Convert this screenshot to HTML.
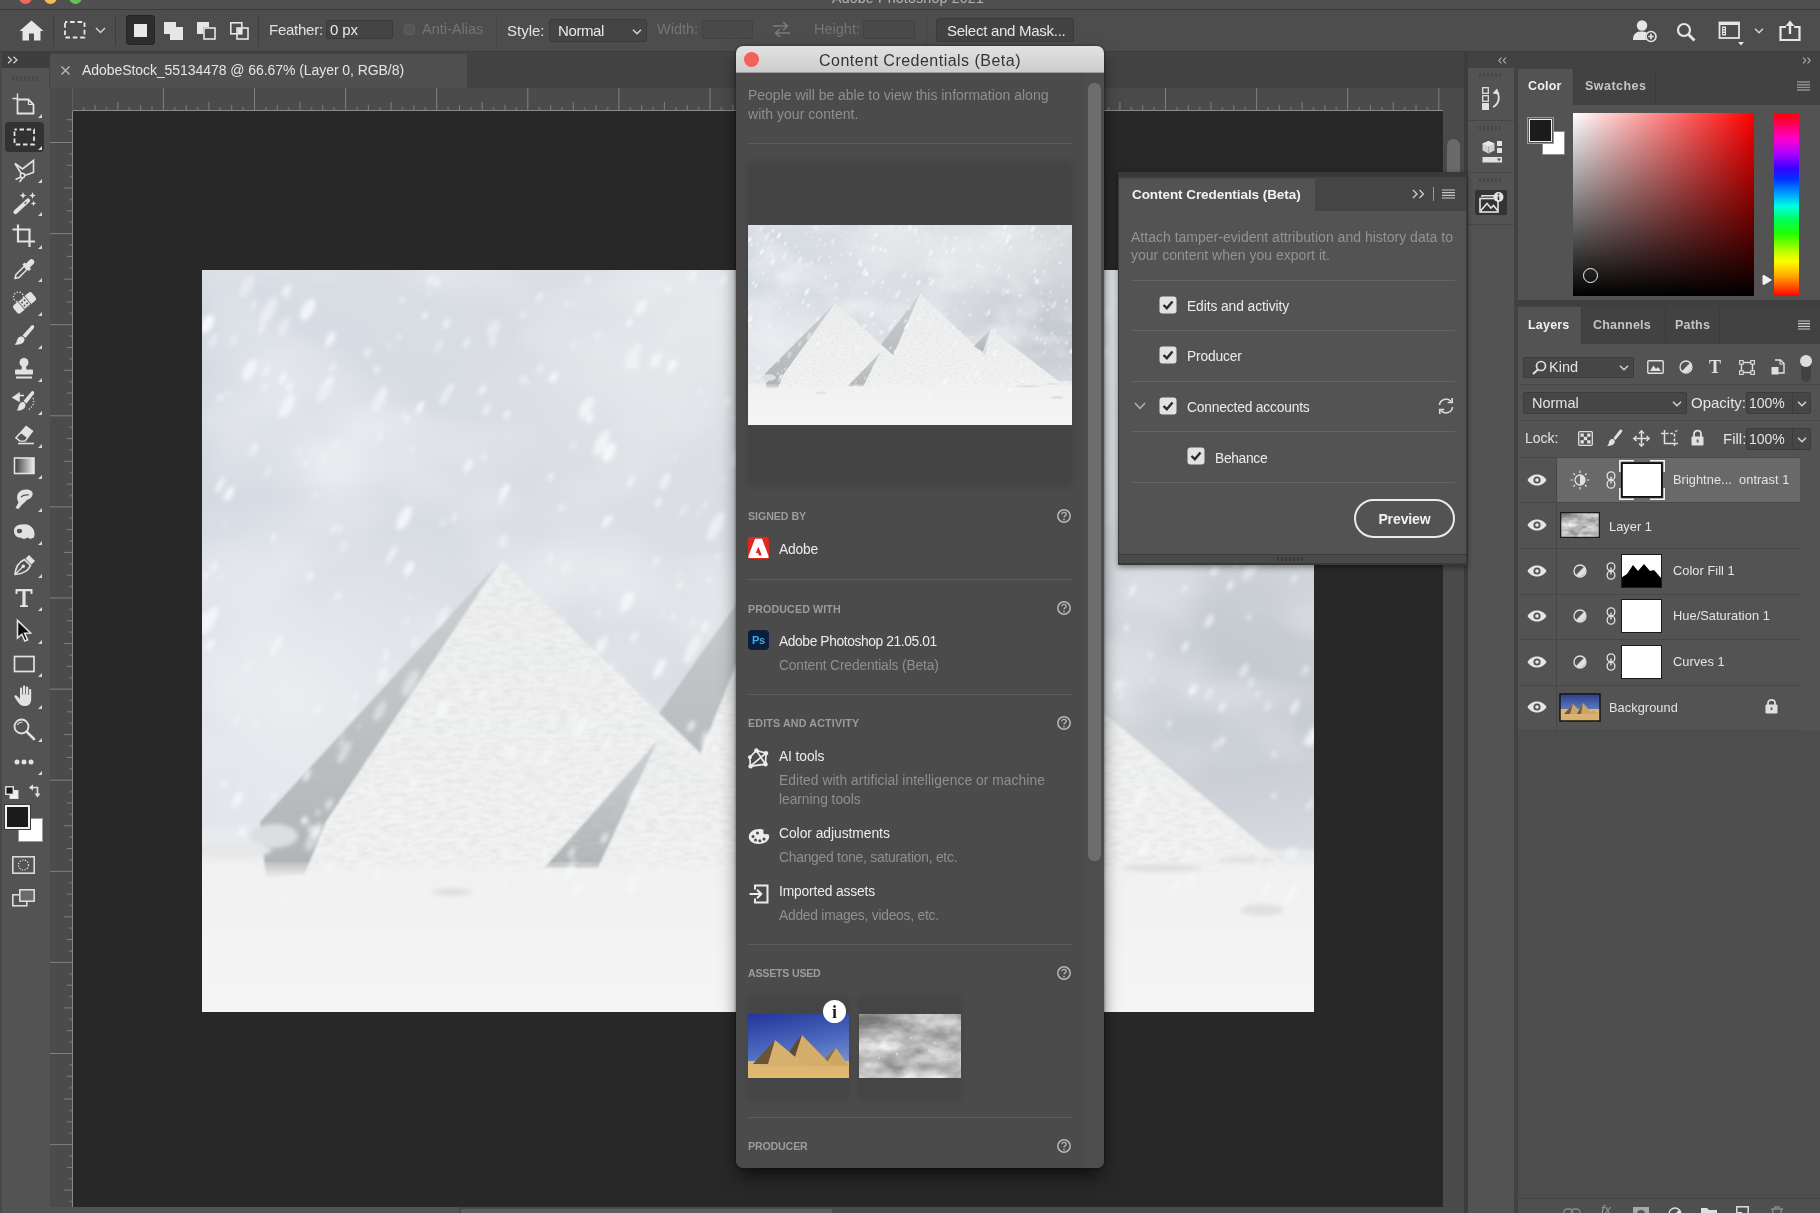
<!DOCTYPE html>
<html lang="en"><head><meta charset="utf-8"><title>Adobe Photoshop 2021</title>
<style>
*{box-sizing:border-box;margin:0;padding:0}
html,body{width:1820px;height:1213px;overflow:hidden;background:#535353;font-family:"Liberation Sans",sans-serif;color:#dcdcdc;font-size:14px}
.a{position:absolute}
#app{left:0;top:0;width:1820px;height:1213px;overflow:hidden;background:#535353}
svg{display:block;overflow:visible}
.t{position:absolute;white-space:nowrap;line-height:1;will-change:transform}
/* ---------- top bars ---------- */
#titlebar{left:0;top:0;width:1820px;height:10px;background:#505050;border-bottom:1px solid #3a3a3a}
#optbar{left:0;top:10px;width:1820px;height:42px;background:#4d4d4d;border-bottom:1px solid #3d3d3d}
#tabbar{left:49px;top:52px;width:1416px;height:36px;background:#434343}
#tab{left:1px;top:2px;width:417px;height:34px;background:#505050}
/* ---------- left toolbar ---------- */
#tools{left:0;top:52px;width:48px;height:1161px;background:#535353;border-left:2px solid #484848}
#toolhead{left:0;top:0;width:48px;height:16px;background:#3e3e3e}
/* ---------- canvas ---------- */
#rulerh{left:50px;top:88px;width:1393px;height:23px;background:#4b4b4b}
#rulerv{left:50px;top:111px;width:23px;height:1096px;background:#4b4b4b}
#canvas{left:73px;top:111px;width:1370px;height:1096px;background:#282828}
#vscroll{left:1443px;top:88px;width:22px;height:1125px;background:#4a4a4a}
#hscroll{left:49px;top:1207px;width:1394px;height:6px;background:#4a4a4a}
/* ---------- right side ---------- */
#rightbg{left:1465px;top:52px;width:355px;height:1161px;background:#424242}
#iconstrip{left:1468px;top:68px;width:46px;height:1145px;background:#535353}
.sec{font-size:11px;font-weight:bold;color:#9c9c9c;letter-spacing:0.100px}
</style></head><body>
<div id="app" class="a">

<svg width="0" height="0" style="position:absolute"><defs>
<linearGradient id="gsky" x1="0" y1="0" x2="1" y2="0"><stop offset="0" stop-color="#d3d9e2"/><stop offset="0.5" stop-color="#d9dce1"/><stop offset="1" stop-color="#d3d6da"/></linearGradient>
<linearGradient id="gskyv" x1="0" y1="0" x2="0" y2="1"><stop offset="0" stop-color="#fff" stop-opacity="0.1"/><stop offset="0.3" stop-color="#fff" stop-opacity="0"/><stop offset="0.6" stop-color="#fff" stop-opacity="0"/><stop offset="0.78" stop-color="#fff" stop-opacity="0.3"/></linearGradient>
<linearGradient id="ggr" x1="0" y1="0" x2="0" y2="1"><stop offset="0" stop-color="#e8e9ea"/><stop offset="0.2" stop-color="#f1f1f1"/><stop offset="1" stop-color="#f5f5f5"/></linearGradient>
<linearGradient id="gsh" x1="0" y1="0" x2="0" y2="1"><stop offset="0" stop-color="#cfd2d5"/><stop offset="0.55" stop-color="#bcc0c2"/><stop offset="1" stop-color="#b0b4b6"/></linearGradient>
<linearGradient id="glit" x1="0" y1="0" x2="0" y2="1"><stop offset="0" stop-color="#eeefef"/><stop offset="1" stop-color="#f3f3f3"/></linearGradient>
<radialGradient id="gcl"><stop offset="0" stop-color="#eef0f2" stop-opacity="0.9"/><stop offset="1" stop-color="#eef0f2" stop-opacity="0"/></radialGradient>
<radialGradient id="gdk"><stop offset="0" stop-color="#bfc5cd" stop-opacity="0.85"/><stop offset="1" stop-color="#bfc5cd" stop-opacity="0"/></radialGradient>
<filter id="fb2" x="-20%" y="-20%" width="140%" height="140%"><feGaussianBlur stdDeviation="2"/></filter>
<filter id="fb1" x="-20%" y="-20%" width="140%" height="140%"><feGaussianBlur stdDeviation="1.1"/></filter>
<filter id="fb6" x="-20%" y="-20%" width="140%" height="140%"><feGaussianBlur stdDeviation="7"/></filter>
<filter id="ftex" x="0" y="0" width="100%" height="100%"><feTurbulence type="fractalNoise" baseFrequency="0.09 0.22" numOctaves="2" seed="4" result="n"/><feColorMatrix type="matrix" values="0 0 0 0 0.62  0 0 0 0 0.63  0 0 0 0 0.64  1.6 1.2 0 0 -1.15" in="n" result="c"/><feComposite in="c" in2="SourceAlpha" operator="in"/></filter>
<filter id="fsky" x="0" y="0" width="100%" height="100%" color-interpolation-filters="sRGB"><feTurbulence type="fractalNoise" baseFrequency="0.005 0.008" numOctaves="3" seed="3" result="n"/><feColorMatrix type="matrix" values="0 0 0 0 0.93  0 0 0 0 0.94  0 0 0 0 0.95  2.0 0 0 0 -0.92" in="n"/></filter>
<filter id="fcloud" x="0" y="0" width="100%" height="100%" color-interpolation-filters="sRGB"><feTurbulence type="fractalNoise" baseFrequency="0.022 0.04" numOctaves="4" seed="9" result="n"/><feColorMatrix type="matrix" values="0.85 0 0 0 0.28  0.85 0 0 0 0.28  0.85 0 0 0 0.28  0 0 0 0 1" in="n"/></filter>
<symbol id="scene" viewBox="0 0 1112 742" preserveAspectRatio="none">
<rect width="1112" height="742" fill="url(#gsky)"/>
<rect width="1112" height="742" fill="url(#gskyv)"/>
<ellipse cx="1010" cy="420" rx="300" ry="260" fill="url(#gdk)"/>
<ellipse cx="420" cy="330" rx="330" ry="170" fill="url(#gcl)" opacity="0.3"/>
<ellipse cx="90" cy="430" rx="250" ry="210" fill="url(#gcl)"/>
<ellipse cx="420" cy="140" rx="200" ry="100" fill="url(#gcl)" opacity="0.35"/>
<ellipse cx="820" cy="90" rx="280" ry="120" fill="url(#gcl)" opacity="0.75"/>
<rect width="1112" height="600" filter="url(#fsky)"/>
<ellipse cx="540" cy="70" rx="230" ry="110" fill="url(#gcl)" opacity="0.55"/>
<polygon points="0,566 1112,588 1112,742 0,742" fill="url(#ggr)"/>
<polygon points="-20,558 1132,580 1132,596 -20,574" fill="#e9eaeb" filter="url(#fb2)" opacity="0.9"/>
<g filter="url(#fb1)">
<polygon points="591,254 451,452 455,600 500,480" fill="url(#gsh)"/>
<polygon points="591,254 500,480 440,604 930,604" fill="url(#glit)"/>
<polygon points="833,386 776,450 806,470" fill="url(#gsh)"/>
<polygon points="833,386 790,604 1095,604" fill="url(#glit)"/>
<polygon points="299,290 58,552 64,608 106,604 124,552" fill="url(#gsh)"/>
<polygon points="299,290 124,552 102,606 625,606" fill="url(#glit)"/>
<polygon points="456,470 342,598 396,598" fill="url(#gsh)"/>
<polygon points="456,470 396,598 650,604" fill="url(#glit)"/>
</g>
<g filter="url(#ftex)" opacity="0.33"><polygon points="591,254 500,480 440,604 930,604"/><polygon points="833,386 790,604 1095,604"/><polygon points="299,290 124,552 102,606 625,606"/><polygon points="456,470 396,598 650,604"/></g>
<ellipse cx="72" cy="566" rx="24" ry="12" fill="#dcdedf" filter="url(#fb2)"/>
<ellipse cx="30" cy="580" rx="40" ry="8" fill="#e6e7e8" filter="url(#fb2)"/>
<rect x="-20" y="598" width="1152" height="30" fill="#f2f2f2" filter="url(#fb6)" opacity="0.95"/>
<g fill="#dfe0e2" filter="url(#fb2)"><ellipse cx="960" cy="598" rx="40" ry="4"/><ellipse cx="1045" cy="590" rx="30" ry="3"/><ellipse cx="1060" cy="640" rx="22" ry="6"/><ellipse cx="250" cy="622" rx="20" ry="4"/></g>
<g fill="#f5f7f9" filter="url(#fb2)" transform="rotate(28)"><ellipse cx="612" cy="79" rx="2.8" ry="6.0" opacity="0.9"/><ellipse cx="427" cy="354" rx="2.8" ry="6.8" opacity="0.9"/><ellipse cx="183" cy="122" rx="1.8" ry="4.0" opacity="0.9"/><ellipse cx="801" cy="4" rx="2.8" ry="8.2" opacity="0.8"/><ellipse cx="652" cy="-233" rx="1.4" ry="3.8" opacity="0.5"/><ellipse cx="299" cy="477" rx="4.2" ry="6.2" opacity="0.7"/><ellipse cx="685" cy="245" rx="3.5" ry="6.3" opacity="0.6"/><ellipse cx="30" cy="45" rx="5.6" ry="10.4" opacity="1.0"/><ellipse cx="1229" cy="-46" rx="2.1" ry="4.0" opacity="0.6"/><ellipse cx="305" cy="-111" rx="1.8" ry="3.6" opacity="0.9"/><ellipse cx="667" cy="338" rx="5.6" ry="8.0" opacity="0.6"/><ellipse cx="1035" cy="-210" rx="2.8" ry="5.8" opacity="0.8"/><ellipse cx="397" cy="277" rx="2.4" ry="3.8" opacity="0.6"/><ellipse cx="1174" cy="-76" rx="1.8" ry="2.9" opacity="0.8"/><ellipse cx="150" cy="256" rx="2.8" ry="4.8" opacity="0.8"/><ellipse cx="496" cy="-126" rx="1.8" ry="3.7" opacity="0.7"/><ellipse cx="684" cy="352" rx="1.4" ry="2.6" opacity="1.0"/><ellipse cx="880" cy="-248" rx="1.4" ry="2.5" opacity="0.7"/><ellipse cx="1031" cy="-84" rx="1.8" ry="2.6" opacity="0.5"/><ellipse cx="436" cy="-225" rx="4.2" ry="8.2" opacity="0.6"/><ellipse cx="99" cy="12" rx="4.2" ry="10.2" opacity="0.5"/><ellipse cx="548" cy="158" rx="1.8" ry="5.1" opacity="0.7"/><ellipse cx="824" cy="188" rx="1.8" ry="4.2" opacity="0.6"/><ellipse cx="407" cy="225" rx="2.1" ry="3.5" opacity="0.8"/><ellipse cx="750" cy="98" rx="2.8" ry="7.9" opacity="0.8"/><ellipse cx="445" cy="-162" rx="1.4" ry="3.1" opacity="0.6"/><ellipse cx="844" cy="-166" rx="2.8" ry="7.6" opacity="0.8"/><ellipse cx="341" cy="-54" rx="1.8" ry="2.8" opacity="0.7"/><ellipse cx="826" cy="6" rx="1.8" ry="3.3" opacity="1.0"/><ellipse cx="205" cy="-97" rx="2.1" ry="4.4" opacity="0.6"/><ellipse cx="130" cy="135" rx="3.5" ry="8.1" opacity="0.5"/><ellipse cx="622" cy="313" rx="2.4" ry="6.0" opacity="0.8"/><ellipse cx="616" cy="-226" rx="1.4" ry="4.0" opacity="0.7"/><ellipse cx="444" cy="-11" rx="1.4" ry="2.0" opacity="0.8"/><ellipse cx="692" cy="160" rx="2.4" ry="4.0" opacity="0.5"/><ellipse cx="555" cy="-29" rx="1.4" ry="4.0" opacity="0.9"/><ellipse cx="929" cy="80" rx="2.4" ry="4.9" opacity="0.8"/><ellipse cx="1145" cy="21" rx="2.8" ry="8.2" opacity="0.5"/><ellipse cx="495" cy="-253" rx="5.6" ry="11.4" opacity="0.8"/><ellipse cx="622" cy="-273" rx="5.6" ry="9.0" opacity="0.6"/><ellipse cx="508" cy="-31" rx="4.2" ry="9.0" opacity="0.7"/><ellipse cx="687" cy="10" rx="3.5" ry="5.2" opacity="0.8"/><ellipse cx="541" cy="-121" rx="1.8" ry="3.9" opacity="0.8"/><ellipse cx="980" cy="-336" rx="1.4" ry="2.8" opacity="0.5"/><ellipse cx="756" cy="-27" rx="2.4" ry="6.0" opacity="0.7"/><ellipse cx="973" cy="-281" rx="5.6" ry="10.2" opacity="0.8"/><ellipse cx="1015" cy="6" rx="2.1" ry="5.9" opacity="0.7"/><ellipse cx="667" cy="-126" rx="1.8" ry="2.9" opacity="0.6"/><ellipse cx="892" cy="-445" rx="1.8" ry="5.1" opacity="0.6"/><ellipse cx="301" cy="166" rx="2.1" ry="6.1" opacity="0.9"/><ellipse cx="531" cy="93" rx="5.6" ry="10.8" opacity="0.9"/><ellipse cx="1100" cy="-258" rx="1.8" ry="4.8" opacity="0.6"/><ellipse cx="800" cy="65" rx="2.1" ry="4.9" opacity="0.6"/><ellipse cx="783" cy="-402" rx="1.8" ry="3.6" opacity="0.6"/><ellipse cx="835" cy="-251" rx="1.8" ry="4.7" opacity="1.0"/><ellipse cx="146" cy="1" rx="3.5" ry="8.6" opacity="0.9"/><ellipse cx="1146" cy="-115" rx="2.1" ry="5.7" opacity="0.6"/><ellipse cx="927" cy="53" rx="3.5" ry="8.9" opacity="0.5"/><ellipse cx="371" cy="53" rx="3.5" ry="7.8" opacity="1.0"/><ellipse cx="411" cy="395" rx="2.1" ry="3.3" opacity="1.0"/><ellipse cx="748" cy="-304" rx="2.8" ry="4.9" opacity="0.9"/><ellipse cx="171" cy="306" rx="5.6" ry="15.7" opacity="0.9"/><ellipse cx="1066" cy="-232" rx="5.6" ry="16.6" opacity="0.5"/><ellipse cx="1090" cy="-2" rx="1.8" ry="3.1" opacity="0.9"/><ellipse cx="1255" cy="39" rx="3.5" ry="10.4" opacity="1.0"/><ellipse cx="472" cy="268" rx="1.4" ry="2.8" opacity="0.5"/><ellipse cx="598" cy="80" rx="2.1" ry="4.6" opacity="0.5"/><ellipse cx="814" cy="-386" rx="1.4" ry="2.4" opacity="0.6"/><ellipse cx="816" cy="-332" rx="1.8" ry="5.2" opacity="0.9"/><ellipse cx="712" cy="111" rx="2.8" ry="8.2" opacity="0.7"/><ellipse cx="958" cy="-447" rx="2.1" ry="4.5" opacity="0.8"/><ellipse cx="984" cy="-118" rx="1.8" ry="3.9" opacity="0.9"/><ellipse cx="643" cy="-117" rx="2.8" ry="8.2" opacity="0.9"/><ellipse cx="690" cy="-147" rx="1.8" ry="5.2" opacity="0.7"/><ellipse cx="623" cy="-186" rx="3.5" ry="5.6" opacity="0.5"/><ellipse cx="531" cy="106" rx="1.4" ry="3.1" opacity="0.7"/><ellipse cx="955" cy="-101" rx="2.8" ry="4.4" opacity="0.5"/><ellipse cx="1051" cy="-227" rx="2.8" ry="5.2" opacity="0.7"/><ellipse cx="255" cy="178" rx="2.8" ry="6.3" opacity="0.5"/><ellipse cx="421" cy="-202" rx="2.1" ry="3.4" opacity="0.9"/><ellipse cx="81" cy="97" rx="2.1" ry="3.0" opacity="0.6"/><ellipse cx="784" cy="-240" rx="2.8" ry="4.5" opacity="0.9"/><ellipse cx="273" cy="224" rx="2.1" ry="5.4" opacity="0.8"/><ellipse cx="870" cy="-446" rx="5.6" ry="11.6" opacity="0.7"/><ellipse cx="218" cy="32" rx="5.6" ry="12.7" opacity="0.6"/><ellipse cx="375" cy="193" rx="4.2" ry="11.7" opacity="0.6"/><ellipse cx="970" cy="70" rx="1.8" ry="3.4" opacity="0.6"/><ellipse cx="971" cy="-359" rx="2.1" ry="5.9" opacity="0.5"/><ellipse cx="453" cy="284" rx="2.1" ry="4.3" opacity="0.7"/><ellipse cx="1087" cy="-185" rx="1.8" ry="3.1" opacity="0.8"/><ellipse cx="813" cy="-363" rx="4.2" ry="10.5" opacity="1.0"/><ellipse cx="985" cy="-441" rx="3.5" ry="8.5" opacity="0.6"/><ellipse cx="1230" cy="-52" rx="1.8" ry="3.8" opacity="0.5"/><ellipse cx="932" cy="-52" rx="4.2" ry="9.2" opacity="0.6"/><ellipse cx="165" cy="37" rx="1.8" ry="5.2" opacity="1.0"/><ellipse cx="112" cy="-15" rx="5.6" ry="12.1" opacity="0.9"/><ellipse cx="461" cy="92" rx="3.5" ry="7.0" opacity="0.6"/><ellipse cx="556" cy="162" rx="1.4" ry="3.9" opacity="0.5"/><ellipse cx="667" cy="180" rx="2.8" ry="8.1" opacity="0.8"/><ellipse cx="330" cy="397" rx="2.4" ry="6.9" opacity="0.9"/><ellipse cx="950" cy="117" rx="5.6" ry="16.3" opacity="0.8"/><ellipse cx="363" cy="230" rx="2.4" ry="6.6" opacity="0.6"/><ellipse cx="1118" cy="-56" rx="1.8" ry="4.7" opacity="0.7"/><ellipse cx="1144" cy="28" rx="2.4" ry="6.5" opacity="0.9"/><ellipse cx="615" cy="195" rx="1.8" ry="4.7" opacity="0.6"/><ellipse cx="365" cy="448" rx="5.6" ry="15.9" opacity="0.5"/><ellipse cx="556" cy="399" rx="2.1" ry="4.1" opacity="0.8"/><ellipse cx="719" cy="3" rx="2.8" ry="6.3" opacity="0.7"/><ellipse cx="245" cy="-44" rx="2.8" ry="8.3" opacity="0.5"/><ellipse cx="826" cy="95" rx="2.1" ry="4.5" opacity="0.7"/><ellipse cx="942" cy="-32" rx="1.4" ry="2.2" opacity="0.6"/><ellipse cx="1054" cy="-163" rx="3.5" ry="7.3" opacity="0.7"/><ellipse cx="861" cy="-386" rx="2.8" ry="7.6" opacity="0.5"/><ellipse cx="814" cy="116" rx="1.4" ry="2.9" opacity="1.0"/><ellipse cx="670" cy="345" rx="2.8" ry="6.4" opacity="0.8"/><ellipse cx="570" cy="54" rx="2.1" ry="4.7" opacity="0.8"/><ellipse cx="445" cy="-30" rx="5.6" ry="10.4" opacity="1.0"/><ellipse cx="876" cy="75" rx="1.4" ry="2.0" opacity="0.6"/><ellipse cx="89" cy="66" rx="5.6" ry="11.4" opacity="0.9"/><ellipse cx="750" cy="-362" rx="2.4" ry="3.8" opacity="0.9"/><ellipse cx="565" cy="45" rx="2.1" ry="3.1" opacity="0.5"/><ellipse cx="1068" cy="89" rx="1.8" ry="5.2" opacity="0.9"/><ellipse cx="627" cy="-250" rx="4.2" ry="8.8" opacity="0.5"/><ellipse cx="952" cy="-249" rx="1.8" ry="2.8" opacity="0.7"/><ellipse cx="792" cy="-92" rx="2.1" ry="5.1" opacity="0.8"/><ellipse cx="580" cy="229" rx="1.8" ry="5.1" opacity="0.9"/><ellipse cx="268" cy="-60" rx="2.1" ry="5.6" opacity="0.8"/><ellipse cx="434" cy="-35" rx="5.6" ry="14.4" opacity="0.8"/><ellipse cx="270" cy="58" rx="2.1" ry="3.6" opacity="0.6"/><ellipse cx="1236" cy="4" rx="5.6" ry="8.3" opacity="0.5"/><ellipse cx="393" cy="98" rx="4.2" ry="6.3" opacity="0.6"/><ellipse cx="500" cy="281" rx="5.6" ry="9.4" opacity="0.6"/><ellipse cx="1109" cy="-240" rx="2.4" ry="4.3" opacity="0.6"/><ellipse cx="983" cy="84" rx="1.8" ry="4.7" opacity="0.7"/><ellipse cx="1058" cy="43" rx="2.1" ry="4.5" opacity="0.9"/><ellipse cx="428" cy="-119" rx="1.8" ry="4.3" opacity="1.0"/><ellipse cx="484" cy="139" rx="1.8" ry="3.7" opacity="0.7"/><ellipse cx="357" cy="442" rx="1.8" ry="4.0" opacity="0.7"/><ellipse cx="802" cy="163" rx="2.8" ry="5.3" opacity="0.9"/><ellipse cx="139" cy="80" rx="5.6" ry="13.3" opacity="0.8"/><ellipse cx="715" cy="172" rx="2.4" ry="4.6" opacity="0.5"/><ellipse cx="569" cy="222" rx="2.4" ry="7.0" opacity="0.6"/><ellipse cx="611" cy="105" rx="5.6" ry="16.0" opacity="0.7"/><ellipse cx="880" cy="-248" rx="2.4" ry="4.4" opacity="1.0"/><ellipse cx="871" cy="-90" rx="1.8" ry="3.5" opacity="0.7"/><ellipse cx="475" cy="33" rx="2.8" ry="7.5" opacity="0.9"/><ellipse cx="478" cy="28" rx="1.8" ry="4.8" opacity="0.8"/><ellipse cx="401" cy="335" rx="2.1" ry="5.7" opacity="0.6"/><ellipse cx="104" cy="59" rx="2.1" ry="6.2" opacity="0.8"/><ellipse cx="809" cy="-384" rx="3.5" ry="6.7" opacity="0.8"/><ellipse cx="410" cy="-20" rx="1.8" ry="5.0" opacity="0.5"/><ellipse cx="666" cy="-250" rx="5.6" ry="11.7" opacity="0.8"/><ellipse cx="752" cy="256" rx="2.4" ry="6.4" opacity="0.7"/><ellipse cx="622" cy="369" rx="5.6" ry="9.2" opacity="0.7"/><ellipse cx="812" cy="-379" rx="4.2" ry="12.0" opacity="0.7"/><ellipse cx="1011" cy="-56" rx="1.4" ry="3.8" opacity="0.9"/><ellipse cx="1159" cy="76" rx="5.6" ry="8.2" opacity="0.6"/><ellipse cx="43" cy="57" rx="2.8" ry="8.0" opacity="0.6"/><ellipse cx="350" cy="273" rx="5.6" ry="9.5" opacity="0.6"/><ellipse cx="505" cy="-57" rx="1.4" ry="3.0" opacity="0.9"/><ellipse cx="345" cy="-71" rx="1.8" ry="5.0" opacity="0.9"/><ellipse cx="161" cy="262" rx="1.4" ry="2.7" opacity="0.6"/><ellipse cx="529" cy="144" rx="4.2" ry="10.7" opacity="0.8"/><ellipse cx="275" cy="-13" rx="2.1" ry="4.3" opacity="1.0"/><ellipse cx="1108" cy="-136" rx="3.5" ry="7.6" opacity="0.6"/><ellipse cx="1145" cy="52" rx="2.4" ry="6.0" opacity="0.9"/><ellipse cx="349" cy="438" rx="2.8" ry="4.2" opacity="1.0"/><ellipse cx="902" cy="-201" rx="3.5" ry="9.4" opacity="0.9"/><ellipse cx="791" cy="-379" rx="2.1" ry="5.9" opacity="0.9"/><ellipse cx="1024" cy="-219" rx="2.1" ry="5.4" opacity="0.8"/><ellipse cx="201" cy="6" rx="2.4" ry="4.1" opacity="0.9"/><ellipse cx="835" cy="-349" rx="4.2" ry="7.8" opacity="0.7"/><ellipse cx="379" cy="355" rx="1.4" ry="2.4" opacity="1.0"/><ellipse cx="185" cy="-5" rx="2.4" ry="4.5" opacity="0.8"/><ellipse cx="239" cy="220" rx="2.8" ry="4.4" opacity="0.9"/><ellipse cx="685" cy="1" rx="1.4" ry="3.7" opacity="0.7"/><ellipse cx="927" cy="-427" rx="2.8" ry="4.9" opacity="0.7"/><ellipse cx="563" cy="-186" rx="2.1" ry="4.0" opacity="0.7"/><ellipse cx="845" cy="271" rx="5.6" ry="14.3" opacity="0.6"/><ellipse cx="706" cy="-299" rx="2.8" ry="7.0" opacity="0.9"/><ellipse cx="807" cy="-341" rx="2.8" ry="4.1" opacity="0.7"/><ellipse cx="768" cy="-237" rx="4.2" ry="6.7" opacity="0.9"/><ellipse cx="1094" cy="29" rx="2.1" ry="6.0" opacity="0.5"/><ellipse cx="897" cy="200" rx="2.1" ry="6.1" opacity="0.9"/><ellipse cx="572" cy="-241" rx="2.1" ry="3.7" opacity="0.9"/><ellipse cx="607" cy="360" rx="4.2" ry="9.1" opacity="0.8"/><ellipse cx="553" cy="-18" rx="1.8" ry="2.9" opacity="0.5"/><ellipse cx="878" cy="45" rx="1.8" ry="3.0" opacity="0.5"/><ellipse cx="666" cy="155" rx="1.8" ry="3.1" opacity="0.5"/><ellipse cx="244" cy="164" rx="1.8" ry="3.4" opacity="0.9"/><ellipse cx="952" cy="-406" rx="2.1" ry="5.5" opacity="0.9"/><ellipse cx="478" cy="-15" rx="2.8" ry="6.7" opacity="0.8"/><ellipse cx="697" cy="-141" rx="2.1" ry="5.2" opacity="0.8"/><ellipse cx="117" cy="177" rx="2.4" ry="4.7" opacity="0.7"/><ellipse cx="608" cy="-175" rx="2.4" ry="6.5" opacity="0.9"/><ellipse cx="648" cy="-230" rx="3.5" ry="10.0" opacity="0.8"/><ellipse cx="496" cy="98" rx="1.8" ry="4.1" opacity="0.6"/><ellipse cx="1216" cy="75" rx="2.1" ry="4.9" opacity="0.5"/><ellipse cx="880" cy="93" rx="1.8" ry="3.2" opacity="0.8"/><ellipse cx="783" cy="-178" rx="2.4" ry="4.5" opacity="0.9"/><ellipse cx="663" cy="175" rx="2.1" ry="6.0" opacity="0.7"/><ellipse cx="718" cy="23" rx="2.1" ry="3.6" opacity="0.9"/><ellipse cx="981" cy="-280" rx="1.8" ry="2.8" opacity="0.9"/><ellipse cx="552" cy="355" rx="2.1" ry="5.5" opacity="0.6"/><ellipse cx="342" cy="250" rx="1.8" ry="3.7" opacity="0.7"/><ellipse cx="1047" cy="115" rx="5.6" ry="9.2" opacity="0.9"/><ellipse cx="1104" cy="68" rx="4.2" ry="9.9" opacity="0.9"/><ellipse cx="76" cy="104" rx="2.8" ry="4.1" opacity="0.7"/><ellipse cx="238" cy="167" rx="2.4" ry="5.5" opacity="0.6"/><ellipse cx="657" cy="-109" rx="5.6" ry="14.9" opacity="0.8"/><ellipse cx="894" cy="-184" rx="2.8" ry="6.6" opacity="0.7"/><ellipse cx="591" cy="137" rx="4.2" ry="11.0" opacity="0.9"/><ellipse cx="775" cy="307" rx="2.8" ry="7.6" opacity="0.5"/><ellipse cx="394" cy="469" rx="2.4" ry="5.5" opacity="0.7"/><ellipse cx="984" cy="-291" rx="1.4" ry="2.7" opacity="0.8"/><ellipse cx="538" cy="-14" rx="2.4" ry="6.4" opacity="0.6"/><ellipse cx="604" cy="-270" rx="1.8" ry="4.8" opacity="0.6"/><ellipse cx="1149" cy="92" rx="2.8" ry="7.1" opacity="0.7"/><ellipse cx="327" cy="48" rx="2.8" ry="8.1" opacity="0.9"/><ellipse cx="1200" cy="-110" rx="5.6" ry="11.2" opacity="0.8"/><ellipse cx="603" cy="-202" rx="5.6" ry="14.6" opacity="0.8"/><ellipse cx="917" cy="-416" rx="1.8" ry="2.8" opacity="0.7"/><ellipse cx="934" cy="-496" rx="2.1" ry="5.4" opacity="0.5"/><ellipse cx="301" cy="159" rx="2.8" ry="7.6" opacity="0.7"/><ellipse cx="525" cy="144" rx="1.4" ry="2.7" opacity="0.7"/><ellipse cx="405" cy="19" rx="1.8" ry="5.1" opacity="1.0"/><ellipse cx="526" cy="-130" rx="2.1" ry="5.8" opacity="0.8"/><ellipse cx="153" cy="147" rx="2.4" ry="7.0" opacity="0.5"/><ellipse cx="833" cy="62" rx="3.5" ry="6.1" opacity="0.8"/><ellipse cx="452" cy="396" rx="1.4" ry="3.4" opacity="0.6"/><ellipse cx="1091" cy="115" rx="2.1" ry="5.9" opacity="0.8"/><ellipse cx="341" cy="322" rx="2.8" ry="5.8" opacity="0.5"/><ellipse cx="882" cy="-382" rx="2.1" ry="3.9" opacity="0.8"/><ellipse cx="581" cy="-95" rx="2.1" ry="4.2" opacity="0.8"/><ellipse cx="1045" cy="-129" rx="2.1" ry="6.2" opacity="0.9"/><ellipse cx="245" cy="33" rx="1.8" ry="4.3" opacity="0.5"/><ellipse cx="1097" cy="-265" rx="3.5" ry="5.4" opacity="0.9"/><ellipse cx="183" cy="327" rx="3.5" ry="6.4" opacity="0.9"/><ellipse cx="171" cy="115" rx="2.1" ry="3.8" opacity="0.6"/><ellipse cx="594" cy="-181" rx="1.8" ry="5.2" opacity="0.5"/><ellipse cx="678" cy="182" rx="2.8" ry="4.0" opacity="0.9"/><ellipse cx="78" cy="5" rx="5.6" ry="16.0" opacity="0.6"/><ellipse cx="484" cy="-234" rx="2.1" ry="4.7" opacity="0.9"/><ellipse cx="828" cy="-64" rx="3.5" ry="6.0" opacity="0.9"/><ellipse cx="344" cy="256" rx="2.1" ry="5.2" opacity="0.8"/><ellipse cx="466" cy="270" rx="2.1" ry="3.9" opacity="0.7"/><ellipse cx="1018" cy="-105" rx="2.1" ry="3.1" opacity="0.8"/><ellipse cx="873" cy="-50" rx="1.8" ry="3.4" opacity="0.8"/><ellipse cx="839" cy="137" rx="3.5" ry="7.4" opacity="0.6"/><ellipse cx="806" cy="-376" rx="1.8" ry="4.1" opacity="0.7"/><ellipse cx="849" cy="-279" rx="1.8" ry="2.6" opacity="0.7"/><ellipse cx="929" cy="99" rx="3.5" ry="9.3" opacity="0.9"/><ellipse cx="684" cy="106" rx="3.5" ry="5.9" opacity="0.6"/><ellipse cx="364" cy="306" rx="4.2" ry="11.2" opacity="0.5"/><ellipse cx="512" cy="-9" rx="2.1" ry="5.3" opacity="1.0"/><ellipse cx="352" cy="359" rx="4.2" ry="12.5" opacity="0.5"/><ellipse cx="670" cy="182" rx="1.4" ry="2.0" opacity="0.7"/><ellipse cx="543" cy="-223" rx="3.5" ry="6.6" opacity="0.7"/><ellipse cx="85" cy="-21" rx="4.2" ry="7.5" opacity="0.6"/><ellipse cx="614" cy="-152" rx="2.8" ry="4.4" opacity="0.6"/><ellipse cx="587" cy="372" rx="4.2" ry="7.4" opacity="0.5"/><ellipse cx="873" cy="255" rx="2.4" ry="5.7" opacity="1.0"/><ellipse cx="1145" cy="59" rx="1.8" ry="3.8" opacity="0.7"/><ellipse cx="942" cy="-225" rx="1.4" ry="2.5" opacity="0.6"/><ellipse cx="345" cy="214" rx="1.8" ry="3.8" opacity="0.7"/><ellipse cx="811" cy="118" rx="2.8" ry="6.0" opacity="1.0"/><ellipse cx="925" cy="132" rx="2.1" ry="4.8" opacity="0.7"/><ellipse cx="129" cy="131" rx="2.1" ry="5.0" opacity="0.7"/><ellipse cx="882" cy="-99" rx="4.2" ry="12.1" opacity="0.8"/><ellipse cx="372" cy="63" rx="1.8" ry="4.5" opacity="0.9"/><ellipse cx="207" cy="64" rx="1.8" ry="2.6" opacity="0.6"/><ellipse cx="402" cy="-154" rx="2.8" ry="5.4" opacity="0.9"/><ellipse cx="526" cy="-240" rx="2.8" ry="6.7" opacity="0.7"/><ellipse cx="338" cy="192" rx="1.8" ry="2.6" opacity="0.6"/><ellipse cx="579" cy="85" rx="1.8" ry="3.9" opacity="0.8"/><ellipse cx="443" cy="91" rx="2.8" ry="4.6" opacity="0.6"/><ellipse cx="489" cy="255" rx="2.8" ry="4.6" opacity="0.7"/><ellipse cx="380" cy="-128" rx="2.4" ry="4.8" opacity="0.6"/><ellipse cx="47" cy="-7" rx="5.6" ry="12.2" opacity="0.5"/><ellipse cx="970" cy="21" rx="5.6" ry="13.9" opacity="1.0"/><ellipse cx="419" cy="275" rx="5.6" ry="9.1" opacity="0.9"/><ellipse cx="602" cy="246" rx="2.1" ry="3.3" opacity="0.7"/><ellipse cx="403" cy="-171" rx="2.8" ry="8.1" opacity="0.6"/><ellipse cx="757" cy="-242" rx="2.8" ry="4.9" opacity="0.9"/><ellipse cx="558" cy="218" rx="3.5" ry="5.5" opacity="0.6"/><ellipse cx="460" cy="-136" rx="4.2" ry="7.7" opacity="0.9"/><ellipse cx="577" cy="354" rx="2.8" ry="4.5" opacity="1.0"/><ellipse cx="977" cy="-323" rx="2.8" ry="6.2" opacity="0.8"/><ellipse cx="558" cy="-61" rx="2.1" ry="3.2" opacity="0.5"/><ellipse cx="429" cy="41" rx="2.1" ry="3.9" opacity="0.8"/><ellipse cx="323" cy="167" rx="4.2" ry="8.3" opacity="0.9"/><ellipse cx="242" cy="382" rx="2.1" ry="5.5" opacity="0.8"/><ellipse cx="733" cy="-93" rx="2.8" ry="4.3" opacity="0.5"/><ellipse cx="590" cy="11" rx="2.8" ry="4.2" opacity="0.5"/><ellipse cx="590" cy="-91" rx="2.4" ry="5.3" opacity="0.5"/><ellipse cx="675" cy="-164" rx="2.1" ry="5.2" opacity="0.6"/><ellipse cx="164" cy="306" rx="2.8" ry="4.0" opacity="0.8"/><ellipse cx="1063" cy="-12" rx="1.8" ry="4.2" opacity="0.8"/><ellipse cx="1106" cy="112" rx="2.4" ry="4.5" opacity="0.5"/><ellipse cx="260" cy="444" rx="2.1" ry="5.3" opacity="0.8"/><ellipse cx="1193" cy="-39" rx="1.8" ry="3.4" opacity="0.8"/><ellipse cx="878" cy="-255" rx="2.8" ry="5.3" opacity="0.9"/><ellipse cx="595" cy="-145" rx="2.1" ry="4.2" opacity="0.8"/><ellipse cx="1122" cy="-63" rx="1.8" ry="5.2" opacity="0.9"/><ellipse cx="962" cy="-288" rx="2.8" ry="6.3" opacity="0.8"/><ellipse cx="226" cy="329" rx="2.8" ry="7.8" opacity="0.5"/><ellipse cx="401" cy="153" rx="2.8" ry="5.1" opacity="0.8"/><ellipse cx="566" cy="193" rx="1.8" ry="3.4" opacity="0.9"/><ellipse cx="1076" cy="27" rx="4.2" ry="12.5" opacity="0.8"/><ellipse cx="345" cy="352" rx="2.1" ry="5.6" opacity="0.5"/><ellipse cx="571" cy="180" rx="2.1" ry="5.2" opacity="1.0"/><ellipse cx="671" cy="145" rx="1.8" ry="3.2" opacity="0.6"/><ellipse cx="447" cy="244" rx="2.8" ry="8.1" opacity="1.0"/><ellipse cx="261" cy="376" rx="1.8" ry="4.9" opacity="0.6"/><ellipse cx="511" cy="117" rx="1.8" ry="3.6" opacity="0.9"/><ellipse cx="1074" cy="47" rx="1.8" ry="3.5" opacity="0.6"/><ellipse cx="1037" cy="55" rx="2.1" ry="3.7" opacity="0.8"/><ellipse cx="443" cy="-133" rx="4.2" ry="8.6" opacity="0.8"/><ellipse cx="776" cy="166" rx="1.8" ry="3.7" opacity="0.9"/><ellipse cx="815" cy="215" rx="2.8" ry="5.9" opacity="0.5"/><ellipse cx="949" cy="-309" rx="4.2" ry="6.9" opacity="0.8"/><ellipse cx="337" cy="-15" rx="2.8" ry="4.9" opacity="0.8"/><ellipse cx="594" cy="-206" rx="1.4" ry="4.0" opacity="0.6"/><ellipse cx="132" cy="62" rx="2.8" ry="4.6" opacity="0.9"/><ellipse cx="1096" cy="-287" rx="1.4" ry="2.9" opacity="0.9"/><ellipse cx="406" cy="-174" rx="3.5" ry="8.4" opacity="0.9"/><ellipse cx="304" cy="-26" rx="2.1" ry="5.9" opacity="1.0"/><ellipse cx="685" cy="238" rx="1.4" ry="2.4" opacity="0.5"/><ellipse cx="201" cy="-21" rx="1.8" ry="3.2" opacity="0.5"/><ellipse cx="564" cy="-255" rx="2.8" ry="4.0" opacity="0.6"/><ellipse cx="945" cy="-495" rx="3.5" ry="6.5" opacity="0.6"/><ellipse cx="1056" cy="-204" rx="2.1" ry="5.7" opacity="0.9"/><ellipse cx="1049" cy="155" rx="1.8" ry="5.1" opacity="0.7"/><ellipse cx="947" cy="-208" rx="4.2" ry="6.2" opacity="0.8"/><ellipse cx="339" cy="100" rx="2.4" ry="5.4" opacity="0.6"/><ellipse cx="1162" cy="-165" rx="2.8" ry="5.6" opacity="0.6"/><ellipse cx="985" cy="-291" rx="1.8" ry="3.2" opacity="0.6"/><ellipse cx="191" cy="-68" rx="1.8" ry="4.0" opacity="0.8"/><ellipse cx="206" cy="-33" rx="1.8" ry="3.5" opacity="0.6"/><ellipse cx="141" cy="214" rx="1.4" ry="2.9" opacity="0.6"/><ellipse cx="813" cy="256" rx="2.1" ry="3.1" opacity="0.5"/><ellipse cx="242" cy="297" rx="4.2" ry="12.5" opacity="0.7"/><ellipse cx="1011" cy="-379" rx="2.8" ry="7.4" opacity="0.9"/><ellipse cx="819" cy="-385" rx="2.8" ry="8.2" opacity="0.6"/><ellipse cx="287" cy="105" rx="1.4" ry="2.3" opacity="0.8"/><ellipse cx="564" cy="165" rx="2.1" ry="5.0" opacity="0.6"/><ellipse cx="646" cy="173" rx="2.8" ry="6.2" opacity="0.8"/><ellipse cx="363" cy="412" rx="2.8" ry="5.9" opacity="0.7"/><ellipse cx="972" cy="-154" rx="2.8" ry="6.6" opacity="0.8"/><ellipse cx="516" cy="-251" rx="5.6" ry="12.0" opacity="0.6"/><ellipse cx="62" cy="7" rx="2.4" ry="4.1" opacity="0.7"/><ellipse cx="1196" cy="-103" rx="2.4" ry="4.2" opacity="0.7"/><ellipse cx="557" cy="-258" rx="1.8" ry="4.6" opacity="0.9"/><ellipse cx="165" cy="47" rx="5.6" ry="15.0" opacity="0.5"/><ellipse cx="144" cy="-1" rx="2.1" ry="6.3" opacity="0.5"/><ellipse cx="1067" cy="-53" rx="2.1" ry="4.7" opacity="0.6"/><ellipse cx="208" cy="-100" rx="2.8" ry="4.9" opacity="0.6"/><ellipse cx="654" cy="-295" rx="3.5" ry="7.4" opacity="0.9"/><ellipse cx="882" cy="-417" rx="2.8" ry="7.8" opacity="0.9"/><ellipse cx="811" cy="224" rx="1.8" ry="4.7" opacity="0.5"/><ellipse cx="606" cy="349" rx="2.1" ry="5.8" opacity="0.5"/><ellipse cx="295" cy="124" rx="5.6" ry="13.4" opacity="0.9"/><ellipse cx="367" cy="519" rx="2.1" ry="4.8" opacity="0.6"/><ellipse cx="1230" cy="47" rx="3.5" ry="8.7" opacity="0.7"/><ellipse cx="117" cy="183" rx="2.4" ry="6.8" opacity="1.0"/><ellipse cx="709" cy="-226" rx="2.1" ry="3.6" opacity="0.5"/><ellipse cx="821" cy="-99" rx="1.8" ry="3.3" opacity="0.6"/><ellipse cx="524" cy="171" rx="2.1" ry="3.6" opacity="1.0"/><ellipse cx="900" cy="54" rx="2.4" ry="6.9" opacity="0.9"/><ellipse cx="218" cy="-64" rx="2.1" ry="4.4" opacity="0.9"/><ellipse cx="538" cy="44" rx="3.5" ry="5.7" opacity="0.5"/><ellipse cx="630" cy="-33" rx="2.8" ry="6.5" opacity="0.6"/><ellipse cx="943" cy="-294" rx="1.8" ry="4.4" opacity="0.7"/><ellipse cx="1033" cy="-269" rx="2.8" ry="6.6" opacity="0.7"/><ellipse cx="189" cy="203" rx="2.1" ry="4.9" opacity="0.8"/><ellipse cx="461" cy="233" rx="1.4" ry="3.5" opacity="0.6"/><ellipse cx="444" cy="-140" rx="2.1" ry="4.3" opacity="0.6"/><ellipse cx="364" cy="443" rx="4.2" ry="6.7" opacity="0.8"/><ellipse cx="508" cy="-119" rx="2.4" ry="3.6" opacity="0.5"/><ellipse cx="788" cy="85" rx="1.4" ry="3.5" opacity="0.5"/><ellipse cx="122" cy="58" rx="3.5" ry="6.7" opacity="0.8"/><ellipse cx="885" cy="231" rx="1.4" ry="4.2" opacity="0.7"/><ellipse cx="1008" cy="-66" rx="1.8" ry="5.2" opacity="0.5"/><ellipse cx="574" cy="-15" rx="5.6" ry="16.2" opacity="0.7"/><ellipse cx="723" cy="-25" rx="1.8" ry="3.9" opacity="0.5"/><ellipse cx="781" cy="-413" rx="5.6" ry="14.1" opacity="0.9"/><ellipse cx="1088" cy="-99" rx="2.8" ry="7.4" opacity="0.5"/><ellipse cx="465" cy="-236" rx="2.4" ry="7.1" opacity="0.9"/><ellipse cx="129" cy="185" rx="3.5" ry="8.1" opacity="1.0"/><ellipse cx="790" cy="-352" rx="3.5" ry="8.1" opacity="0.5"/><ellipse cx="432" cy="249" rx="3.5" ry="7.8" opacity="0.6"/><ellipse cx="837" cy="-267" rx="2.8" ry="6.1" opacity="1.0"/><ellipse cx="629" cy="-212" rx="1.8" ry="3.8" opacity="0.9"/><ellipse cx="357" cy="425" rx="1.8" ry="2.9" opacity="0.8"/><ellipse cx="356" cy="258" rx="1.8" ry="3.6" opacity="0.5"/><ellipse cx="396" cy="381" rx="2.8" ry="4.7" opacity="0.7"/><ellipse cx="61" cy="47" rx="2.1" ry="6.0" opacity="0.7"/><ellipse cx="981" cy="39" rx="2.8" ry="5.8" opacity="0.5"/><ellipse cx="290" cy="-73" rx="2.8" ry="5.4" opacity="0.7"/><ellipse cx="908" cy="158" rx="1.8" ry="4.1" opacity="0.7"/><ellipse cx="1006" cy="-250" rx="2.1" ry="3.9" opacity="0.8"/><ellipse cx="241" cy="-67" rx="2.8" ry="5.7" opacity="0.8"/><ellipse cx="363" cy="-108" rx="2.1" ry="5.8" opacity="0.5"/><ellipse cx="682" cy="33" rx="2.8" ry="7.6" opacity="0.8"/><ellipse cx="710" cy="-354" rx="2.4" ry="5.4" opacity="0.6"/><ellipse cx="882" cy="-117" rx="1.4" ry="2.8" opacity="0.8"/><ellipse cx="309" cy="333" rx="2.4" ry="7.2" opacity="0.7"/><ellipse cx="698" cy="-104" rx="2.1" ry="3.7" opacity="0.9"/><ellipse cx="110" cy="74" rx="1.8" ry="3.9" opacity="0.9"/><ellipse cx="80" cy="25" rx="2.1" ry="4.9" opacity="0.9"/><ellipse cx="1120" cy="-128" rx="2.4" ry="5.0" opacity="0.6"/><ellipse cx="693" cy="-307" rx="2.1" ry="5.7" opacity="0.6"/><ellipse cx="557" cy="296" rx="2.1" ry="5.1" opacity="0.5"/><ellipse cx="764" cy="-372" rx="4.2" ry="6.6" opacity="0.5"/><ellipse cx="549" cy="227" rx="4.2" ry="12.2" opacity="0.9"/><ellipse cx="571" cy="-300" rx="2.8" ry="5.8" opacity="0.8"/><ellipse cx="1240" cy="3" rx="1.8" ry="3.0" opacity="0.5"/><ellipse cx="715" cy="-279" rx="2.8" ry="7.0" opacity="0.9"/><ellipse cx="706" cy="273" rx="1.8" ry="4.8" opacity="1.0"/><ellipse cx="599" cy="283" rx="1.8" ry="4.4" opacity="0.7"/><ellipse cx="874" cy="7" rx="1.8" ry="5.0" opacity="0.6"/><ellipse cx="568" cy="86" rx="1.8" ry="2.9" opacity="0.6"/><ellipse cx="669" cy="292" rx="2.8" ry="4.9" opacity="0.8"/><ellipse cx="616" cy="-12" rx="2.8" ry="6.3" opacity="0.7"/><ellipse cx="796" cy="195" rx="4.2" ry="8.1" opacity="0.5"/><ellipse cx="1003" cy="-63" rx="2.8" ry="6.6" opacity="0.7"/><ellipse cx="554" cy="121" rx="2.8" ry="5.6" opacity="0.8"/><ellipse cx="766" cy="302" rx="2.4" ry="3.8" opacity="0.7"/><ellipse cx="726" cy="-132" rx="2.8" ry="6.5" opacity="0.6"/><ellipse cx="310" cy="431" rx="2.8" ry="5.1" opacity="0.6"/><ellipse cx="911" cy="-437" rx="1.8" ry="5.2" opacity="1.0"/><ellipse cx="593" cy="36" rx="2.1" ry="3.6" opacity="0.8"/><ellipse cx="817" cy="-73" rx="1.8" ry="2.6" opacity="0.8"/><ellipse cx="723" cy="14" rx="2.4" ry="5.4" opacity="0.7"/><ellipse cx="1060" cy="-306" rx="2.1" ry="3.3" opacity="0.9"/><ellipse cx="274" cy="-2" rx="3.5" ry="9.1" opacity="0.6"/><ellipse cx="217" cy="22" rx="1.8" ry="5.0" opacity="1.0"/><ellipse cx="786" cy="-155" rx="2.1" ry="5.0" opacity="0.9"/><ellipse cx="997" cy="-450" rx="2.4" ry="3.6" opacity="0.7"/><ellipse cx="337" cy="33" rx="2.1" ry="4.9" opacity="0.6"/><ellipse cx="83" cy="-23" rx="2.1" ry="6.1" opacity="0.5"/><ellipse cx="629" cy="260" rx="3.5" ry="9.7" opacity="0.8"/><ellipse cx="754" cy="130" rx="3.5" ry="9.1" opacity="0.8"/><ellipse cx="770" cy="52" rx="2.1" ry="3.2" opacity="1.0"/><ellipse cx="592" cy="254" rx="2.1" ry="4.6" opacity="0.8"/><ellipse cx="404" cy="-59" rx="5.6" ry="12.4" opacity="0.8"/><ellipse cx="412" cy="-51" rx="3.5" ry="5.6" opacity="1.0"/><ellipse cx="667" cy="-303" rx="1.4" ry="2.2" opacity="0.8"/><ellipse cx="414" cy="495" rx="2.1" ry="4.2" opacity="0.5"/><ellipse cx="1131" cy="-121" rx="1.8" ry="2.6" opacity="0.8"/><ellipse cx="1170" cy="-127" rx="3.5" ry="8.0" opacity="0.7"/><ellipse cx="693" cy="-306" rx="2.4" ry="5.9" opacity="1.0"/><ellipse cx="894" cy="-402" rx="1.8" ry="3.8" opacity="0.5"/><ellipse cx="645" cy="60" rx="3.5" ry="5.5" opacity="0.9"/><ellipse cx="317" cy="-10" rx="2.1" ry="6.1" opacity="1.0"/><ellipse cx="1210" cy="25" rx="2.8" ry="8.1" opacity="0.5"/><ellipse cx="658" cy="77" rx="5.6" ry="13.0" opacity="0.9"/><ellipse cx="361" cy="-70" rx="3.5" ry="5.9" opacity="1.0"/><ellipse cx="196" cy="111" rx="2.1" ry="6.2" opacity="0.5"/><ellipse cx="280" cy="451" rx="4.2" ry="9.4" opacity="0.8"/><ellipse cx="986" cy="60" rx="1.4" ry="2.8" opacity="1.0"/><ellipse cx="331" cy="110" rx="2.1" ry="4.3" opacity="0.6"/><ellipse cx="345" cy="-173" rx="2.1" ry="3.9" opacity="0.8"/><ellipse cx="617" cy="-86" rx="5.6" ry="11.1" opacity="0.8"/><ellipse cx="1038" cy="-253" rx="2.1" ry="3.5" opacity="0.6"/><ellipse cx="705" cy="191" rx="2.4" ry="4.2" opacity="0.8"/><ellipse cx="778" cy="17" rx="4.2" ry="7.7" opacity="0.9"/><ellipse cx="251" cy="35" rx="2.1" ry="4.7" opacity="0.9"/><ellipse cx="211" cy="-87" rx="2.1" ry="4.8" opacity="0.5"/><ellipse cx="823" cy="-261" rx="2.1" ry="3.1" opacity="0.8"/><ellipse cx="336" cy="305" rx="1.8" ry="5.0" opacity="1.0"/><ellipse cx="421" cy="-126" rx="5.6" ry="14.9" opacity="0.6"/><ellipse cx="890" cy="-199" rx="2.1" ry="4.9" opacity="1.0"/><ellipse cx="359" cy="513" rx="1.4" ry="2.1" opacity="0.5"/><ellipse cx="1064" cy="-259" rx="1.8" ry="2.9" opacity="0.6"/><ellipse cx="1150" cy="83" rx="2.4" ry="4.8" opacity="1.0"/><ellipse cx="353" cy="329" rx="1.4" ry="2.4" opacity="0.5"/><ellipse cx="930" cy="143" rx="5.6" ry="12.0" opacity="0.7"/><ellipse cx="200" cy="91" rx="1.8" ry="5.2" opacity="0.8"/><ellipse cx="701" cy="-284" rx="2.4" ry="4.2" opacity="0.5"/><ellipse cx="679" cy="29" rx="4.2" ry="8.9" opacity="0.9"/><ellipse cx="285" cy="-85" rx="5.6" ry="10.0" opacity="0.5"/><ellipse cx="532" cy="267" rx="5.6" ry="12.4" opacity="0.5"/><ellipse cx="495" cy="148" rx="2.1" ry="4.6" opacity="0.9"/><ellipse cx="692" cy="-115" rx="2.8" ry="6.0" opacity="0.6"/><ellipse cx="1220" cy="58" rx="1.4" ry="3.0" opacity="0.8"/><ellipse cx="618" cy="-125" rx="1.4" ry="2.4" opacity="0.9"/><ellipse cx="214" cy="-99" rx="2.1" ry="4.4" opacity="1.0"/><ellipse cx="620" cy="-284" rx="1.4" ry="2.4" opacity="0.5"/><ellipse cx="311" cy="-135" rx="2.1" ry="5.8" opacity="0.8"/><ellipse cx="750" cy="-218" rx="2.4" ry="4.1" opacity="0.5"/><ellipse cx="752" cy="43" rx="2.8" ry="6.4" opacity="0.7"/><ellipse cx="600" cy="341" rx="2.1" ry="5.2" opacity="0.8"/><ellipse cx="1072" cy="-94" rx="2.8" ry="6.2" opacity="1.0"/><ellipse cx="335" cy="-54" rx="2.4" ry="4.4" opacity="0.8"/><ellipse cx="439" cy="452" rx="2.1" ry="5.1" opacity="0.8"/><ellipse cx="147" cy="268" rx="1.8" ry="3.9" opacity="1.0"/><ellipse cx="618" cy="-55" rx="1.4" ry="3.5" opacity="0.7"/><ellipse cx="742" cy="217" rx="4.2" ry="9.1" opacity="0.5"/><ellipse cx="633" cy="12" rx="5.6" ry="9.3" opacity="0.5"/><ellipse cx="544" cy="-253" rx="2.1" ry="5.6" opacity="0.6"/><ellipse cx="1053" cy="17" rx="2.1" ry="3.6" opacity="0.8"/><ellipse cx="206" cy="146" rx="1.4" ry="4.1" opacity="0.7"/><ellipse cx="561" cy="-88" rx="5.6" ry="12.4" opacity="0.6"/><ellipse cx="257" cy="19" rx="2.8" ry="7.5" opacity="1.0"/><ellipse cx="1106" cy="-93" rx="2.1" ry="5.7" opacity="0.9"/><ellipse cx="417" cy="367" rx="2.1" ry="5.4" opacity="0.5"/><ellipse cx="1080" cy="117" rx="5.6" ry="11.0" opacity="0.9"/><ellipse cx="872" cy="195" rx="5.6" ry="15.6" opacity="1.0"/><ellipse cx="235" cy="63" rx="2.1" ry="5.9" opacity="0.6"/><ellipse cx="391" cy="294" rx="2.1" ry="6.3" opacity="0.8"/><ellipse cx="341" cy="344" rx="1.4" ry="3.0" opacity="0.7"/><ellipse cx="613" cy="218" rx="1.4" ry="3.3" opacity="1.0"/><ellipse cx="775" cy="-56" rx="2.8" ry="7.1" opacity="0.5"/><ellipse cx="1017" cy="-180" rx="2.1" ry="3.8" opacity="0.8"/><ellipse cx="161" cy="25" rx="2.8" ry="5.4" opacity="0.6"/><ellipse cx="378" cy="267" rx="5.6" ry="14.8" opacity="0.5"/><ellipse cx="339" cy="-141" rx="1.4" ry="2.6" opacity="1.0"/><ellipse cx="896" cy="219" rx="1.4" ry="2.7" opacity="0.6"/><ellipse cx="659" cy="2" rx="1.4" ry="2.2" opacity="0.8"/></g>
</symbol>
</defs></svg>
<!-- TITLEBAR -->
<div id="titlebar" class="a">
  <div class="a" style="left:19px;top:-9px;width:13px;height:13px;border-radius:50%;background:#ee6a5f"></div>
  <div class="a" style="left:44px;top:-9px;width:13px;height:13px;border-radius:50%;background:#f5bd4f"></div>
  <div class="a" style="left:69px;top:-9px;width:13px;height:13px;border-radius:50%;background:#61c454"></div>
  <div class="t" style="left:832px;top:-9px;color:#b4b4b4;font-size:14.2px;letter-spacing:0.184px">Adobe Photoshop 2021</div>
</div>
<!-- OPTIONS BAR -->
<div id="optbar" class="a">
  <!-- home -->
  <svg class="a" style="left:19px;top:10px" width="25" height="21" viewBox="0 0 25 21"><path d="M12.5 0.5 L24.5 11 L21.5 11 L21.5 20.5 L15 20.5 L15 13.5 L10 13.5 L10 20.5 L3.5 20.5 L3.5 11 L0.5 11 Z" fill="#e6e6e6"/></svg>
  <div class="a" style="left:53px;top:6px;width:1px;height:30px;background:#3e3e3e"></div>
  <!-- marquee -->
  <svg class="a" style="left:64px;top:11px" width="22" height="18" viewBox="0 0 22 18"><rect x="1" y="1" width="19.5" height="15.5" fill="none" stroke="#e6e6e6" stroke-width="1.8" stroke-dasharray="4.6 2.8" stroke-dashoffset="2.3"/></svg>
  <svg class="a" style="left:95px;top:17px" width="11" height="7" viewBox="0 0 11 7"><path d="M1 1L5.5 5.5L10 1" fill="none" stroke="#d0d0d0" stroke-width="1.5"/></svg>
  <div class="a" style="left:115px;top:6px;width:1px;height:30px;background:#3e3e3e"></div>
  <!-- new selection (selected) -->
  <div class="a" style="left:126px;top:5px;width:29px;height:30px;background:#2d2d2d;border-radius:3px;border:1px solid #262626"></div>
  <div class="a" style="left:134px;top:14px;width:13px;height:13px;background:#e8e8e8"></div>
  <!-- add -->
  <svg class="a" style="left:164px;top:12px" width="19" height="18" viewBox="0 0 19 18"><path d="M0 0H12V5H19V18H6V12H0Z" fill="#e6e6e6"/></svg>
  <!-- subtract -->
  <svg class="a" style="left:197px;top:12px" width="19" height="18" viewBox="0 0 19 18"><path d="M0 0H12V5H6V12H0Z" fill="#e6e6e6"/><rect x="7" y="6" width="11" height="11" fill="none" stroke="#e6e6e6" stroke-width="1.6"/></svg>
  <!-- intersect -->
  <svg class="a" style="left:230px;top:12px" width="19" height="18" viewBox="0 0 19 18"><rect x="0.8" y="0.8" width="11" height="11" fill="none" stroke="#e6e6e6" stroke-width="1.6"/><rect x="7" y="6" width="11" height="11" fill="none" stroke="#e6e6e6" stroke-width="1.6"/><rect x="7.5" y="6.5" width="4" height="5" fill="#e6e6e6"/></svg>
  <div class="a" style="left:258px;top:6px;width:1px;height:30px;background:#3e3e3e"></div>
  <div class="t" style="left:269px;top:12px;font-size:15px;color:#e2e2e2;letter-spacing:-0.259px">Feather:</div>
  <div class="a" style="left:326px;top:10px;width:67px;height:19px;background:#444;border:1px solid #3a3a3a;border-radius:2px"></div>
  <div class="t" style="left:330px;top:12px;font-size:15px;color:#e8e8e8;letter-spacing:-0.140px">0 px</div>
  <div class="a" style="left:404px;top:14px;width:11px;height:11px;background:#565656;border:1px solid #5e5e5e;border-radius:2px"></div>
  <div class="t" style="left:422px;top:12px;font-size:14.5px;color:#747474">Anti-Alias</div>
  <div class="a" style="left:496px;top:6px;width:1px;height:30px;background:#444"></div>
  <div class="t" style="left:507px;top:13px;font-size:15px;color:#e2e2e2">Style:</div>
  <div class="a" style="left:549px;top:9px;width:98px;height:23px;background:#444;border:1px solid #3a3a3a;border-radius:3px"></div>
  <div class="t" style="left:558px;top:13px;font-size:15px;color:#e8e8e8;letter-spacing:-0.391px">Normal</div>
  <svg class="a" style="left:632px;top:19px" width="10" height="6" viewBox="0 0 10 6"><path d="M1 0.8L5 4.8L9 0.8" fill="none" stroke="#d8d8d8" stroke-width="1.4"/></svg>
  <div class="t" style="left:657px;top:12px;font-size:14.5px;color:#757575">Width:</div>
  <div class="a" style="left:702px;top:10px;width:51px;height:19px;background:#494949;border:1px solid #434343;border-radius:2px"></div>
  <svg class="a" style="left:772px;top:11px" width="19" height="17" viewBox="0 0 19 17"><path d="M1 5H15M11 1L15.5 5L11 9" fill="none" stroke="#7a7a7a" stroke-width="1.6"/><path d="M18 12H4M8 8L3.5 12L8 16" fill="none" stroke="#7a7a7a" stroke-width="1.6"/></svg>
  <div class="t" style="left:814px;top:12px;font-size:14.5px;color:#757575">Height:</div>
  <div class="a" style="left:863px;top:10px;width:52px;height:19px;background:#494949;border:1px solid #434343;border-radius:2px"></div>
  <div class="a" style="left:926px;top:6px;width:1px;height:30px;background:#444"></div>
  <div class="a" style="left:936px;top:8px;width:138px;height:24px;background:#434343;border:1px solid #3a3a3a;border-radius:3px"></div>
  <div class="t" style="left:947px;top:13px;font-size:15px;color:#e6e6e6;letter-spacing:-0.273px">Select and Mask...</div>
  <!-- right icons -->
  <svg class="a" style="left:1632px;top:9px" width="26" height="24" viewBox="0 0 26 24"><circle cx="10" cy="6.5" r="5.2" fill="#e6e6e6"/><path d="M1 21C1 14 5 12.5 10 12.5C12.5 12.5 14 13 15 14C13 16 13 19 14.5 21Z" fill="#e6e6e6"/><circle cx="19" cy="17.5" r="5" fill="none" stroke="#e6e6e6" stroke-width="1.6"/><path d="M19 14.8V20.2M16.3 17.5H21.7" stroke="#e6e6e6" stroke-width="1.6"/></svg>
  <svg class="a" style="left:1676px;top:12px" width="20" height="20" viewBox="0 0 20 20"><circle cx="8" cy="8" r="6" fill="none" stroke="#e6e6e6" stroke-width="2.2"/><path d="M12.5 12.5L18.5 18.5" stroke="#e6e6e6" stroke-width="2.8"/></svg>
  <svg class="a" style="left:1718px;top:11px" width="27" height="25" viewBox="0 0 27 25"><rect x="1.500" y="1.500" width="19.500" height="15.500" fill="none" stroke="#e6e6e6" stroke-width="1.800"/><path d="M1 3H21.500" stroke="#e6e6e6" stroke-width="2"/><rect x="4" y="5.500" width="4" height="9" fill="#e6e6e6"/><path d="M5 7.500H7M5 10H7M5 12.500H7" stroke="#4d4d4d" stroke-width="1"/><path d="M20 21H26L23 24.500Z" fill="#e6e6e6"/></svg>
  <svg class="a" style="left:1754px;top:18px" width="10" height="6" viewBox="0 0 10 6"><path d="M1 0.8L5 4.8L9 0.8" fill="none" stroke="#d8d8d8" stroke-width="1.4"/></svg>
  <svg class="a" style="left:1779px;top:10px" width="22" height="22" viewBox="0 0 22 22"><path d="M7 7H1.500V20H20.500V7H15" fill="none" stroke="#e6e6e6" stroke-width="2.200"/><path d="M11 14V4" stroke="#e6e6e6" stroke-width="2.400"/><path d="M6.500 6L11 0.500L15.500 6Z" fill="#e6e6e6"/></svg>
</div>
<!-- TAB BAR -->
<div id="tabbar" class="a"><div id="tab" class="a">
  <svg class="a" style="left:11px;top:12px" width="9" height="9" viewBox="0 0 9 9"><path d="M0.500 0.500L8.500 8.500M8.500 0.500L0.500 8.500" stroke="#bdbdbd" stroke-width="1.2"/></svg>
  <div class="t" style="left:32px;top:9px;font-size:14px;color:#e4e4e4;letter-spacing:-0.061px">AdobeStock_55134478 @ 66.67% (Layer 0, RGB/8)</div>
</div></div>
<!-- TOOLS -->
<div id="tools" class="a"><div id="toolhead" class="a"><svg class="a" style="left:5px;top:4px" width="12" height="8" viewBox="0 0 12 8"><path d="M1 0.800L4.500 4L1 7.200M6.500 0.800L10 4L6.500 7.200" fill="none" stroke="#cfcfcf" stroke-width="1.300"/></svg></div>
<div class="a" style="left:10px;top:24px;width:26px;height:5px;background:repeating-linear-gradient(90deg,#484848 0 2px,#535353 2px 4px)"></div>
<svg class="a" style="left:10px;top:40.5px" width="24" height="24" viewBox="0 0 24 24"><path d="M5.500 0.500V6M0.500 5.500H5" stroke="#e2e2e2" stroke-width="1.4" fill="none"/><path d="M5.500 6.500H16.500L21.500 11.500V20.500H5.500Z" fill="none" stroke="#e2e2e2" stroke-width="1.8"/><path d="M16.500 6.500V11.500H21.500" fill="none" stroke="#e2e2e2" stroke-width="1.2"/></svg><svg class="a" style="left:36px;top:61.5px" width="4" height="4" viewBox="0 0 4 4"><path d="M4 0V4H0Z" fill="#d8d8d8"/></svg>
<div class="a" style="left:3px;top:70px;width:39px;height:30px;background:#323232;border-radius:4px"></div><svg class="a" style="left:10px;top:73px" width="24" height="24" viewBox="0 0 24 24"><rect x="2.500" y="4.500" width="19.500" height="15" fill="none" stroke="#e2e2e2" stroke-width="1.8" stroke-dasharray="4.500 2.700" stroke-dashoffset="2.200"/></svg><svg class="a" style="left:36px;top:94px" width="4" height="4" viewBox="0 0 4 4"><path d="M4 0V4H0Z" fill="#d8d8d8"/></svg>
<svg class="a" style="left:10px;top:106px" width="24" height="24" viewBox="0 0 24 24"><path d="M3 5.500L10.500 11L21.500 2.500V14.500L12.500 17.500" fill="none" stroke="#e2e2e2" stroke-width="1.6" stroke-linejoin="miter"/><path d="M3 5.500L9.500 16" stroke="#e2e2e2" stroke-width="1.600"/><circle cx="10.500" cy="17.500" r="2.200" fill="none" stroke="#e2e2e2" stroke-width="1.400"/><path d="M9 19L3.500 21.500M10.500 20L7.500 24" stroke="#e2e2e2" stroke-width="1.500"/></svg><svg class="a" style="left:36px;top:127px" width="4" height="4" viewBox="0 0 4 4"><path d="M4 0V4H0Z" fill="#d8d8d8"/></svg>
<svg class="a" style="left:10px;top:138.5px" width="24" height="24" viewBox="0 0 24 24"><path d="M3.500 21L16 9.500" stroke="#e2e2e2" stroke-width="4.200" stroke-linecap="round"/><path d="M12.500 12.700L14.500 10.900" stroke="#535353" stroke-width="1.200"/><path d="M11 1.1L11.952 3.548L14.4 4.5L11.952 5.452L11 7.9L10.048 5.452L7.6 4.5L10.048 3.548ZM20.5 1.1L21.452 3.548L23.9 4.5L21.452 5.452L20.5 7.9L19.548 5.452L17.1 4.5L19.548 3.548ZM21.5 9.7L22.284 11.716L24.3 12.5L22.284 13.284L21.5 15.3L20.716 13.284L18.7 12.5L20.716 11.716Z" fill="#e2e2e2"/></svg><svg class="a" style="left:36px;top:159.5px" width="4" height="4" viewBox="0 0 4 4"><path d="M4 0V4H0Z" fill="#d8d8d8"/></svg>
<svg class="a" style="left:10px;top:172px" width="24" height="24" viewBox="0 0 24 24"><path d="M6 0.500V17.500H23" fill="none" stroke="#e2e2e2" stroke-width="2.200"/><path d="M0.500 5.500H17.500V23" fill="none" stroke="#e2e2e2" stroke-width="2.200"/><path d="M6 0V6M18 17.500H23.500" stroke="#535353" stroke-width="0"/></svg><svg class="a" style="left:36px;top:193px" width="4" height="4" viewBox="0 0 4 4"><path d="M4 0V4H0Z" fill="#d8d8d8"/></svg>
<svg class="a" style="left:10px;top:205px" width="24" height="24" viewBox="0 0 24 24"><path d="M3 21.500L4 17.500L13 8.500L16 11.500L7 20.500Z" fill="none" stroke="#e2e2e2" stroke-width="1.600" stroke-linejoin="round"/><path d="M11.500 6.500L18 13" stroke="#e2e2e2" stroke-width="3"/><path d="M15 9.500L19.500 5" stroke="#e2e2e2" stroke-width="5.500" stroke-linecap="round"/></svg><svg class="a" style="left:36px;top:226px" width="4" height="4" viewBox="0 0 4 4"><path d="M4 0V4H0Z" fill="#d8d8d8"/></svg>
<svg class="a" style="left:10px;top:238.5px" width="24" height="24" viewBox="0 0 24 24"><g transform="rotate(-40 12 12)"><rect x="0.500" y="7" width="24" height="10.500" rx="2.500" fill="#e2e2e2"/><rect x="8" y="7" width="9" height="10.500" fill="#535353"/><rect x="8.700" y="7.700" width="7.600" height="9.100" fill="#e2e2e2"/><g fill="#535353"><circle cx="10.800" cy="10.300" r="1"/><circle cx="14.200" cy="10.300" r="1"/><circle cx="10.800" cy="14.200" r="1"/><circle cx="14.200" cy="14.200" r="1"/></g></g><circle cx="6.500" cy="6" r="5" fill="none" stroke="#e2e2e2" stroke-width="1.200" stroke-dasharray="1.500 1.500"/></svg><svg class="a" style="left:36px;top:259.5px" width="4" height="4" viewBox="0 0 4 4"><path d="M4 0V4H0Z" fill="#d8d8d8"/></svg>
<svg class="a" style="left:10px;top:271.5px" width="24" height="24" viewBox="0 0 24 24"><path d="M21.500 1.500C22.500 2.500 22.500 3 21.500 4.500L13.500 14L10.500 11.500L19 2C20 1 20.500 0.800 21.500 1.500Z" fill="#e2e2e2"/><path d="M9.500 12.500C11.500 12.500 12.500 14 12.500 15.500C12.500 19 8 21.500 2.500 20.500C5 19 4.500 17 5.500 15C6.500 13 8 12.500 9.500 12.500Z" fill="#e2e2e2"/></svg><svg class="a" style="left:36px;top:292.5px" width="4" height="4" viewBox="0 0 4 4"><path d="M4 0V4H0Z" fill="#d8d8d8"/></svg>
<svg class="a" style="left:10px;top:304.5px" width="24" height="24" viewBox="0 0 24 24"><circle cx="12" cy="5.500" r="4.500" fill="#e2e2e2"/><path d="M10 8H14L14.500 13H9.500Z" fill="#e2e2e2"/><rect x="3" y="12.500" width="18" height="5" rx="1" fill="#e2e2e2"/><rect x="4" y="19.500" width="16" height="2" fill="#e2e2e2"/></svg><svg class="a" style="left:36px;top:325.5px" width="4" height="4" viewBox="0 0 4 4"><path d="M4 0V4H0Z" fill="#d8d8d8"/></svg>
<svg class="a" style="left:10px;top:337.5px" width="24" height="24" viewBox="0 0 24 24"><path d="M21.500 1.500C22.500 2.500 22.500 3 21.500 4.500L14.500 13.500L11.500 11L19 2C20 1 20.500 0.800 21.500 1.500Z" fill="#e2e2e2"/><path d="M10.500 12C12.500 12 13.500 13.500 13.500 15C13.500 18.500 9.500 21 4.500 20.500C6.500 19 6 17 7 15C8 13 9 12 10.500 12Z" fill="#e2e2e2"/><path d="M12 5.500H3.500M1 7.500L7 3.500V11Z" stroke="#e2e2e2" stroke-width="1.500" fill="#e2e2e2"/><path d="M21 8C23 12 21 17 16 20" fill="none" stroke="#e2e2e2" stroke-width="1.200" stroke-dasharray="1.400 1.600"/></svg><svg class="a" style="left:36px;top:358.5px" width="4" height="4" viewBox="0 0 4 4"><path d="M4 0V4H0Z" fill="#d8d8d8"/></svg>
<svg class="a" style="left:10px;top:371px" width="24" height="24" viewBox="0 0 24 24"><path d="M14 2.500L21.500 8L13.500 18.500H7.500L3 15Z" fill="#e2e2e2"/><path d="M9 9.500L15.500 14.500L13 18H8L4 14.800Z" fill="#535353"/><path d="M9 9.500L15.500 14.500L13 18H8L4 14.800Z" fill="none" stroke="#e2e2e2" stroke-width="1.200"/><path d="M6 20.500H22" stroke="#e2e2e2" stroke-width="1.600"/></svg><svg class="a" style="left:36px;top:392px" width="4" height="4" viewBox="0 0 4 4"><path d="M4 0V4H0Z" fill="#d8d8d8"/></svg>
<svg class="a" style="left:10px;top:401.5px" width="24" height="24" viewBox="0 0 24 24"><defs><linearGradient id="tg" x1="0" x2="1"><stop offset="0" stop-color="#3a3a3a"/><stop offset="1" stop-color="#f0f0f0"/></linearGradient></defs><rect x="2.500" y="4" width="19.500" height="15.500" fill="url(#tg)" stroke="#e2e2e2" stroke-width="1.600"/></svg><svg class="a" style="left:36px;top:422.5px" width="4" height="4" viewBox="0 0 4 4"><path d="M4 0V4H0Z" fill="#d8d8d8"/></svg>
<svg class="a" style="left:10px;top:434.5px" width="24" height="24" viewBox="0 0 24 24"><path d="M6 6.500C8 3 12 2 15.500 2.500C19 3 21.500 5 20.500 8C20 10 18 12 15 13L14 14C12 16 10 17.500 8.500 19.500L6.500 22L3.500 21L6.500 15.500C5 13 4.500 9.500 6 6.500Z" fill="#e2e2e2"/><path d="M9 10C11 8 14 7.500 17 8" stroke="#535353" stroke-width="1.200" fill="none"/></svg><svg class="a" style="left:36px;top:455.5px" width="4" height="4" viewBox="0 0 4 4"><path d="M4 0V4H0Z" fill="#d8d8d8"/></svg>
<svg class="a" style="left:10px;top:467.5px" width="24" height="24" viewBox="0 0 24 24"><path d="M2 11C2 6.500 6 4 10.500 4.500C14 3.500 18 4.500 20.500 8C22.500 10.500 23 14 22 17.500L18 19L16 17.500L12 19L8 17.500C4.500 17.500 2 15 2 11Z" fill="#e2e2e2"/><ellipse cx="7.500" cy="11" rx="2.600" ry="2.300" fill="#535353"/></svg><svg class="a" style="left:36px;top:488.5px" width="4" height="4" viewBox="0 0 4 4"><path d="M4 0V4H0Z" fill="#d8d8d8"/></svg>
<svg class="a" style="left:10px;top:500.5px" width="24" height="24" viewBox="0 0 24 24"><path d="M3 21.500C3.500 15 6 9.500 12.500 6.500L18.500 12.500C16 18.500 10 21 3 21.500Z" fill="none" stroke="#e2e2e2" stroke-width="1.700" stroke-linejoin="round"/><path d="M3.500 21L10.500 14" stroke="#e2e2e2" stroke-width="1.300"/><circle cx="11.300" cy="13.200" r="1.700" fill="#e2e2e2"/><path d="M13.500 5.500L17 2L23 8L19.500 11.500Z" fill="#e2e2e2"/></svg><svg class="a" style="left:36px;top:521.5px" width="4" height="4" viewBox="0 0 4 4"><path d="M4 0V4H0Z" fill="#d8d8d8"/></svg>
<svg class="a" style="left:10px;top:533.5px" width="24" height="24" viewBox="0 0 24 24"><path d="M3.500 3H20.500V8H18.800L18.300 5.300H13.600V19L16 19.500V21H8V19.500L10.400 19V5.300H5.700L5.200 8H3.500Z" fill="#e2e2e2"/></svg><svg class="a" style="left:36px;top:554.5px" width="4" height="4" viewBox="0 0 4 4"><path d="M4 0V4H0Z" fill="#d8d8d8"/></svg>
<svg class="a" style="left:10px;top:566.5px" width="24" height="24" viewBox="0 0 24 24"><path d="M5.500 1.500V19L9.800 15.200L12.800 22L15.600 20.800L12.600 14.200L18.500 14Z" fill="#0c0c0c" stroke="#e2e2e2" stroke-width="1.600" stroke-linejoin="miter"/></svg><svg class="a" style="left:36px;top:587.5px" width="4" height="4" viewBox="0 0 4 4"><path d="M4 0V4H0Z" fill="#d8d8d8"/></svg>
<svg class="a" style="left:10px;top:599.5px" width="24" height="24" viewBox="0 0 24 24"><rect x="2.500" y="4.500" width="19.500" height="15" fill="none" stroke="#e2e2e2" stroke-width="1.700"/></svg><svg class="a" style="left:36px;top:620.5px" width="4" height="4" viewBox="0 0 4 4"><path d="M4 0V4H0Z" fill="#d8d8d8"/></svg>
<svg class="a" style="left:10px;top:632px" width="24" height="24" viewBox="0 0 24 24"><path d="M8 12V4.500C8 3 10.200 3 10.200 4.500V10.500H11V2.500C11 1 13.200 1 13.200 2.500V10.500H14V3.500C14 2 16.200 2 16.200 3.500V11H17V6C17 4.500 19.200 4.500 19.200 6V15C19.200 19.500 17 22 13 22C9.500 22 7.500 20.500 5.500 17.500L2.500 13C1.800 11.500 3.500 10.500 4.800 11.800L8 15Z" fill="#e2e2e2"/></svg><svg class="a" style="left:36px;top:653px" width="4" height="4" viewBox="0 0 4 4"><path d="M4 0V4H0Z" fill="#d8d8d8"/></svg>
<svg class="a" style="left:10px;top:665px" width="24" height="24" viewBox="0 0 24 24"><circle cx="9.500" cy="9.500" r="7" fill="none" stroke="#e2e2e2" stroke-width="1.800"/><path d="M14.800 14.800L22 22" stroke="#e2e2e2" stroke-width="2.600" stroke-linecap="round"/><path d="M5.500 8C6.500 5.800 8.500 5 10.500 5.300" fill="none" stroke="#e2e2e2" stroke-width="1.100"/></svg><svg class="a" style="left:36px;top:686px" width="4" height="4" viewBox="0 0 4 4"><path d="M4 0V4H0Z" fill="#d8d8d8"/></svg>
<svg class="a" style="left:10px;top:698px" width="24" height="24" viewBox="0 0 24 24"><circle cx="5" cy="12" r="2.500" fill="#e2e2e2"/><circle cx="12" cy="12" r="2.500" fill="#e2e2e2"/><circle cx="19" cy="12" r="2.500" fill="#e2e2e2"/></svg><svg class="a" style="left:36px;top:719px" width="4" height="4" viewBox="0 0 4 4"><path d="M4 0V4H0Z" fill="#d8d8d8"/></svg>
<svg class="a" style="left:3px;top:734px" width="14" height="13" viewBox="0 0 14 13"><rect x="5" y="4.500" width="8" height="8" fill="#f0f0f0" stroke="#e2e2e2" stroke-width="1"/><rect x="0.800" y="0.800" width="7.500" height="7.500" fill="#1a1a1a" stroke="#e2e2e2" stroke-width="1.400"/></svg>
<svg class="a" style="left:26px;top:733px" width="13" height="13" viewBox="0 0 13 13"><path d="M3 4V2.500H9.500V9" fill="none" stroke="#e2e2e2" stroke-width="1.600"/><path d="M0 4.500L3 0.500L6 4.500Z" fill="#e2e2e2" transform="translate(0 0) rotate(-90 3 2.500)"/><path d="M6.500 8.500L9.500 12.500L12.500 8.500Z" fill="#e2e2e2"/></svg>
<div class="a" style="left:16px;top:766px;width:25px;height:24px;background:#fff;border:1px solid #9a9a9a"></div>
<div class="a" style="left:3px;top:753px;width:25px;height:24px;background:#1b1b1b;border:2px solid #f2f2f2;outline:1px solid #3a3a3a"></div>
<svg class="a" style="left:10px;top:804px" width="23" height="18" viewBox="0 0 23 18"><rect x="0.800" y="0.800" width="21.400" height="16.400" fill="none" stroke="#e2e2e2" stroke-width="1.500"/><circle cx="11.500" cy="9" r="5" fill="none" stroke="#e2e2e2" stroke-width="1.200" stroke-dasharray="1.300 1.400"/></svg>
<svg class="a" style="left:10px;top:837px" width="23" height="18" viewBox="0 0 23 18"><rect x="0.800" y="5.800" width="14" height="11" fill="none" stroke="#e2e2e2" stroke-width="1.500"/><rect x="7.800" y="0.800" width="14.400" height="11.400" fill="#6a6a6a" stroke="#e2e2e2" stroke-width="1.500"/></svg>
</div>
<!-- RULERS + CANVAS -->
<div id="rulerh" class="a">
<svg width="1393" height="23"><defs>
<pattern id="rh" x="21.800" y="0" width="91.100" height="23" patternUnits="userSpaceOnUse">
<path d="M0.500 0V23" stroke="#808080" stroke-width="1"/>
<path d="M11.900 19V23M34.700 19V23M57.400 19V23M80.200 19V23" stroke="#808080" stroke-width="1"/>
<path d="M23.300 17V23M68.800 17V23" stroke="#808080" stroke-width="1"/>
<path d="M46 14V23" stroke="#808080" stroke-width="1"/>
</pattern></defs><rect x="22" width="1371" height="23" fill="url(#rh)"/>
<path d="M23 22.500H1393" stroke="#8a8a8a"/><path d="M22.500 0V23" stroke="#5e5e5e"/></svg>
</div>
<div id="rulerv" class="a">
<svg width="23" height="1096"><defs>
<pattern id="rv" x="0" y="31" width="23" height="91.100" patternUnits="userSpaceOnUse">
<path d="M0 0.500H23" stroke="#808080" stroke-width="1"/>
<path d="M19 11.900H23M19 34.700H23M19 57.400H23M19 80.200H23" stroke="#808080" stroke-width="1"/>
<path d="M17 23.300H23M17 68.800H23" stroke="#808080" stroke-width="1"/>
<path d="M14 46H23" stroke="#808080" stroke-width="1"/>
</pattern></defs><rect width="23" height="1096" fill="url(#rv)"/>
<path d="M22.500 0V1096" stroke="#8a8a8a"/></svg>
</div>
<div id="canvas" class="a">
  <svg class="a" style="left:129px;top:159px" width="1112" height="742"><use href="#scene" width="1112" height="742"/></svg>
</div>
<div id="vscroll" class="a">
  <div class="a" style="left:4px;top:51px;width:13px;height:40px;border-radius:6.500px;background:#6a6a6a"></div>
</div>
<div id="hscroll" class="a"><div class="a" style="left:0;top:0;width:410px;height:6px;background:#535353"></div><div class="a" style="left:412px;top:2px;width:371px;height:4px;background:#5e5e5e"></div></div>
<!-- RIGHT -->
<div id="rightbg" class="a"></div>
<div class="a" style="left:1464px;top:52px;width:4px;height:1161px;background:#3c3c3c"></div>
<div id="iconstrip" class="a"></div>
<!-- top strip arrows -->
<svg class="a" style="left:1498px;top:57px" width="9" height="7" viewBox="0 0 9 7"><path d="M3.500 0.500L0.800 3.500L3.500 6.500M8 0.500L5.300 3.500L8 6.500" fill="none" stroke="#b8b8b8" stroke-width="1.100"/></svg>
<svg class="a" style="left:1802px;top:57px" width="9" height="7" viewBox="0 0 9 7"><path d="M1 0.500L3.700 3.500L1 6.500M5.500 0.500L8.200 3.500L5.500 6.500" fill="none" stroke="#b8b8b8" stroke-width="1.100"/></svg>
<!-- ICON STRIP contents -->
<div class="a" style="left:1468px;top:68px;width:46px;height:157px">
  <div class="a" style="left:11px;top:5px;width:24px;height:4px;background:repeating-linear-gradient(90deg,#474747 0 2px,#535353 2px 4px)"></div>
  <!-- history icon -->
  <svg class="a" style="left:14px;top:19px" width="21" height="24" viewBox="0 0 21 24"><rect x="0.700" y="0.700" width="5.600" height="5.600" fill="none" stroke="#e0e0e0" stroke-width="1.300"/><rect x="0.700" y="8.700" width="5.600" height="5.600" fill="none" stroke="#e0e0e0" stroke-width="1.300"/><rect x="0" y="16" width="7" height="7" fill="#e0e0e0"/><path d="M11 20C17 17 18.500 9.500 14.500 4.500" fill="none" stroke="#e0e0e0" stroke-width="1.900"/><path d="M10.500 6.500L15 1.500L17.500 7.500Z" fill="#e0e0e0"/></svg>
  <div class="a" style="left:0;top:52px;width:46px;height:1px;background:#474747"></div>
  <div class="a" style="left:11px;top:58px;width:24px;height:4px;background:repeating-linear-gradient(90deg,#474747 0 2px,#535353 2px 4px)"></div>
  <!-- properties/3D icon -->
  <svg class="a" style="left:14px;top:72px" width="21" height="24" viewBox="0 0 21 24"><path d="M6.500 1L12.500 3.500V10.500L6.500 13.500L0.500 10.500V3.500Z" fill="#cfcfcf"/><path d="M6.500 1L12.500 3.500L6.500 6.500L0.500 3.500Z" fill="#e6e6e6"/><path d="M6.500 6.500V13.500" stroke="#9a9a9a" stroke-width="0.800"/><rect x="15" y="1" width="5" height="5" fill="#e0e0e0"/><rect x="15" y="8" width="5" height="5" fill="#e0e0e0"/><rect x="0.500" y="17" width="19.500" height="5.500" fill="#e0e0e0"/><path d="M15 18.500H19L17 21.500Z" fill="#535353"/></svg>
  <div class="a" style="left:0;top:104px;width:46px;height:1px;background:#474747"></div>
  <div class="a" style="left:11px;top:110px;width:24px;height:4px;background:repeating-linear-gradient(90deg,#474747 0 2px,#535353 2px 4px)"></div>
  <!-- content credentials icon (selected) -->
  <div class="a" style="left:7px;top:122px;width:32px;height:25px;background:#343434;border-radius:2px"></div>
  <svg class="a" style="left:11px;top:123px" width="26" height="23" viewBox="0 0 26 23"><rect x="1" y="7.500" width="18" height="13.500" fill="none" stroke="#e4e4e4" stroke-width="1.600"/><path d="M3 6V4.800H16" fill="none" stroke="#e4e4e4" stroke-width="1.400"/><path d="M1.500 20L8 12.500L12 17L14.500 14.500L19 20" fill="none" stroke="#e4e4e4" stroke-width="1.600"/><circle cx="19.500" cy="6" r="5" fill="#e4e4e4"/><path d="M19.500 5.300V9" stroke="#343434" stroke-width="1.500"/><circle cx="19.500" cy="3.300" r="0.900" fill="#343434"/></svg>
  <div class="a" style="left:0;top:156px;width:46px;height:1px;background:#474747"></div>
</div>
<!-- COLOR PANEL -->
<div class="a" style="left:1518px;top:68px;width:302px;height:232px;background:#535353">
  <div class="a" style="left:0;top:0;width:302px;height:37px;background:#424242"></div>
  <div class="a" style="left:0;top:1px;width:55px;height:37px;background:#535353"></div>
  <div class="a" style="left:137px;top:1px;width:1px;height:35px;background:#3a3a3a"></div>
  <div class="a" style="left:55px;top:1px;width:1px;height:35px;background:#3a3a3a"></div>
  <div class="t" style="left:10px;top:12px;font-size:12.500px;font-weight:bold;color:#f0f0f0;letter-spacing:0.200px">Color</div>
  <div class="t" style="left:67px;top:12px;font-size:12.500px;font-weight:bold;color:#c4c4c4;letter-spacing:0.466px">Swatches</div>
  <svg class="a" style="left:279px;top:13px" width="13" height="10" viewBox="0 0 13 10"><path d="M0 1H13M0 3.700H13M0 6.400H13M0 9H13" stroke="#8e8e8e" stroke-width="1.400"/></svg>
  <!-- fg/bg swatches -->
  <div class="a" style="left:24px;top:63px;width:23px;height:24px;background:#fff;border:1px solid #8c8c8c"></div>
  <div class="a" style="left:9px;top:49px;width:27px;height:27px;border:1px solid #9a9a9a;background:#535353"></div>
  <div class="a" style="left:11px;top:51px;width:23px;height:23px;background:#1b1b1b;border:1.500px solid #f0f0f0"></div>
  <!-- color field -->
  <div class="a" style="left:55px;top:45px;width:181px;height:183px;background:linear-gradient(to bottom,rgba(0,0,0,0),#000),linear-gradient(to right,#fff,#ff0000)"></div>
  <div class="a" style="left:65px;top:200px;width:15px;height:15px;border-radius:50%;border:1.600px solid #f4f4f4"></div>
  <!-- hue strip -->
  <div class="a" style="left:256px;top:45px;width:25px;height:183px;background:linear-gradient(to bottom,#ff0000 0%,#ff0066 7%,#ff00cc 14%,#b000ff 22%,#3a00ff 30%,#0030ff 36%,#00aaff 45%,#00ffe0 51%,#00ff60 58%,#20ff00 66%,#b0ff00 75%,#ffff00 81%,#ffaa00 89%,#ff4000 96%,#ff0000 100%)"></div>
  <svg class="a" style="left:244px;top:206px" width="10" height="12" viewBox="0 0 10 12"><path d="M0.500 2.500C0.500 1.500 1.500 0.800 2.500 1.200L9 5.200C9.700 5.600 9.700 6.400 9 6.800L2.500 10.800C1.500 11.200 0.500 10.500 0.500 9.500Z" fill="#f2f2f2"/></svg>
</div>
<div class="a" style="left:1518px;top:300px;width:302px;height:6px;background:#3f3f3f"></div>
<!-- LAYERS PANEL -->
<div class="a" style="left:1518px;top:306px;width:302px;height:907px;background:#535353">
<div class="a" style="left:0;top:0;width:302px;height:38px;background:#424242"></div>
<div class="a" style="left:0;top:1px;width:63px;height:38px;background:#535353"></div>
<div class="a" style="left:63px;top:1px;width:1px;height:36px;background:#3a3a3a"></div>
<div class="a" style="left:147px;top:1px;width:1px;height:36px;background:#3a3a3a"></div>
<div class="a" style="left:201px;top:1px;width:1px;height:36px;background:#3a3a3a"></div>
<div class="t" style="left:10px;top:13px;font-size:12.500px;font-weight:bold;color:#f0f0f0;letter-spacing:0.200px">Layers</div>
<div class="t" style="left:75px;top:13px;font-size:12.500px;font-weight:bold;color:#c4c4c4;letter-spacing:0.200px">Channels</div>
<div class="t" style="left:157px;top:13px;font-size:12.500px;font-weight:bold;color:#c4c4c4;letter-spacing:0.200px">Paths</div>
<svg class="a" style="left:280px;top:14px" width="12" height="10" viewBox="0 0 12 10"><path d="M0 1H12M0 3.700H12M0 6.400H12M0 9H12" stroke="#c8c8c8" stroke-width="1.200"/></svg>
<div class="a" style="left:5px;top:51px;width:111px;height:21px;background:#464646;border:1px solid #3c3c3c;border-radius:2px"></div>
<svg class="a" style="left:14px;top:54px" width="15" height="15" viewBox="0 0 15 15"><circle cx="9" cy="6" r="4.500" fill="none" stroke="#e0e0e0" stroke-width="1.700"/><path d="M6 9.500L1 14" stroke="#e0e0e0" stroke-width="2"/></svg>
<div class="t" style="left:31px;top:54px;font-size:14.500px;color:#e4e4e4">Kind</div>
<svg class="a" style="left:101px;top:59px" width="10" height="6" viewBox="0 0 10 6"><path d="M1 0.800L5 4.800L9 0.800" fill="none" stroke="#d8d8d8" stroke-width="1.400"/></svg>
<svg class="a" style="left:129px;top:54px" width="17" height="14" viewBox="0 0 17 14"><rect x="0.800" y="0.800" width="15.400" height="12.400" rx="1" fill="none" stroke="#e0e0e0" stroke-width="1.400"/><path d="M3 11L6.500 5.500L9 9L11 7L14 11Z" fill="#e0e0e0"/></svg>
<svg class="a" style="left:161px;top:54px" width="14" height="14" viewBox="0 0 14 14"><circle cx="7" cy="7" r="6" fill="none" stroke="#e0e0e0" stroke-width="1.300"/><path d="M11.200 2.800A6 6 0 0 1 2.800 11.200Z" fill="#e0e0e0"/></svg>
<div class="t" style="left:191px;top:52px;font-size:18px;font-weight:bold;color:#e0e0e0;font-family:'Liberation Serif',serif">T</div>
<svg class="a" style="left:221px;top:54px" width="16" height="15" viewBox="0 0 16 15"><rect x="2.500" y="2.500" width="11" height="10" fill="none" stroke="#e0e0e0" stroke-width="1.400"/><g fill="#535353" stroke="#e0e0e0" stroke-width="1.100"><rect x="0.600" y="0.600" width="3.600" height="3.600"/><rect x="11.800" y="0.600" width="3.600" height="3.600"/><rect x="0.600" y="10.800" width="3.600" height="3.600"/><rect x="11.800" y="10.800" width="3.600" height="3.600"/></g></svg>
<svg class="a" style="left:253px;top:53px" width="14" height="16" viewBox="0 0 14 16"><path d="M4 1H9.500L13 4.500V14H7" fill="none" stroke="#e0e0e0" stroke-width="1.400"/><path d="M9 1V5H13" fill="none" stroke="#e0e0e0" stroke-width="1.100"/><rect x="0.500" y="8" width="7" height="7.500" fill="#e0e0e0"/></svg>
<div class="a" style="left:283px;top:50px;width:10px;height:26px;border-radius:5px;background:#424242"></div><div class="a" style="left:282px;top:49px;width:12px;height:12px;border-radius:6px;background:#dcdcdc"></div>
<div class="a" style="left:0;top:78px;width:302px;height:1px;background:#484848"></div>
<div class="a" style="left:5px;top:86px;width:164px;height:22px;background:#464646;border:1px solid #3c3c3c;border-radius:2px"></div>
<div class="t" style="left:14px;top:90px;font-size:14.500px;color:#e4e4e4">Normal</div>
<svg class="a" style="left:154px;top:95px" width="10" height="6" viewBox="0 0 10 6"><path d="M1 0.800L5 4.800L9 0.800" fill="none" stroke="#d8d8d8" stroke-width="1.400"/></svg>
<div class="t" style="left:173px;top:89px;font-size:15px;color:#e4e4e4">Opacity:</div>
<div class="a" style="left:228px;top:86px;width:65px;height:22px;background:#464646;border:1px solid #3c3c3c;border-radius:2px"></div><div class="a" style="left:274px;top:87px;width:1px;height:20px;background:#3c3c3c"></div>
<div class="t" style="left:231px;top:90px;font-size:14px;color:#e4e4e4">100%</div>
<svg class="a" style="left:279px;top:95px" width="10" height="6" viewBox="0 0 10 6"><path d="M1 0.800L5 4.800L9 0.800" fill="none" stroke="#d8d8d8" stroke-width="1.400"/></svg>
<div class="a" style="left:0;top:114px;width:302px;height:1px;background:#4a4a4a"></div>
<div class="t" style="left:7px;top:125px;font-size:14px;color:#e4e4e4">Lock:</div>
<svg class="a" style="left:60px;top:125px" width="15" height="15" viewBox="0 0 15 15"><rect x="0.700" y="0.700" width="13.600" height="13.600" rx="1" fill="none" stroke="#e0e0e0" stroke-width="1.300"/><g fill="#e0e0e0"><rect x="2.500" y="2.500" width="3.300" height="3.300"/><rect x="9.200" y="2.500" width="3.300" height="3.300"/><rect x="5.800" y="5.800" width="3.400" height="3.400"/><rect x="2.500" y="9.200" width="3.300" height="3.300"/><rect x="9.200" y="9.200" width="3.300" height="3.300"/></g></svg>
<svg class="a" style="left:88px;top:123px" width="17" height="18" viewBox="0 0 17 18"><path d="M15.500 0.800C16.500 1.500 16.500 2.200 15.800 3.200L9.500 11L7.300 9.200L13.500 1.200C14.200 0.400 14.800 0.300 15.500 0.800Z" fill="#e0e0e0"/><path d="M6.300 10C7.800 10 8.800 11.200 8.800 12.500C8.800 15.500 5 17.500 1 16.800C3 15.500 2.500 14 3.300 12.200C4 10.600 5 10 6.300 10Z" fill="#e0e0e0"/></svg>
<svg class="a" style="left:115px;top:124px" width="17" height="17" viewBox="0 0 17 17"><path d="M8.500 1.500V15.500M1.500 8.500H15.500" stroke="#e0e0e0" stroke-width="1.500"/><path d="M6 3.500L8.500 0.800L11 3.500M6 13.500L8.500 16.200L11 13.500M3.500 6L0.800 8.500L3.500 11M13.500 6L16.200 8.500L13.500 11" fill="none" stroke="#e0e0e0" stroke-width="1.400"/></svg>
<svg class="a" style="left:143px;top:124px" width="18" height="17" viewBox="0 0 18 17"><path d="M3.500 0V13.500H17" fill="none" stroke="#e0e0e0" stroke-width="1.500"/><path d="M0 3.500H13.500V17" fill="none" stroke="#e0e0e0" stroke-width="1.500" stroke-dasharray="3 1.600"/><path d="M14 1.500L16.500 0.500" stroke="#e0e0e0" stroke-width="1.200"/></svg>
<svg class="a" style="left:173px;top:123px" width="13" height="17" viewBox="0 0 13 17"><path d="M3 8V5C3 0.500 10 0.500 10 5V8" fill="none" stroke="#e0e0e0" stroke-width="1.800"/><rect x="0.500" y="7.500" width="12" height="9" rx="1" fill="#e0e0e0"/><rect x="5.700" y="10.500" width="1.800" height="3" fill="#535353"/></svg>
<div class="t" style="left:205px;top:125px;font-size:15px;color:#e4e4e4">Fill:</div>
<div class="a" style="left:228px;top:122px;width:65px;height:22px;background:#464646;border:1px solid #3c3c3c;border-radius:2px"></div><div class="a" style="left:274px;top:123px;width:1px;height:20px;background:#3c3c3c"></div>
<div class="t" style="left:231px;top:126px;font-size:14px;color:#e4e4e4">100%</div>
<svg class="a" style="left:279px;top:131px" width="10" height="6" viewBox="0 0 10 6"><path d="M1 0.800L5 4.800L9 0.800" fill="none" stroke="#d8d8d8" stroke-width="1.400"/></svg>
<div class="a" style="left:0;top:425px;width:302px;height:467px;background:#4d4d4d"></div>
<div class="a" style="left:38px;top:151px;width:1px;height:273px;background:#474747"></div>
<div class="a" style="left:39px;top:152px;width:243px;height:44px;background:#696969"></div>
<div class="a" style="left:0;top:151px;width:282px;height:1px;background:#484848"></div>
<div class="a" style="left:0;top:196px;width:282px;height:1px;background:#484848"></div>
<div class="a" style="left:0;top:241.5px;width:282px;height:1px;background:#484848"></div>
<div class="a" style="left:0;top:287.5px;width:282px;height:1px;background:#484848"></div>
<div class="a" style="left:0;top:333px;width:282px;height:1px;background:#484848"></div>
<div class="a" style="left:0;top:378.5px;width:282px;height:1px;background:#484848"></div>
<div class="a" style="left:0;top:424px;width:282px;height:1px;background:#484848"></div>
<svg class="a" style="left:9px;top:168px" width="20" height="12" viewBox="0 0 20 12"><path d="M0.500 6C3 2 6.500 0.500 10 0.500C13.500 0.500 17 2 19.500 6C17 10 13.500 11.500 10 11.500C6.500 11.500 3 10 0.500 6Z" fill="#e6e6e6"/><circle cx="10" cy="6" r="3.600" fill="#535353"/><circle cx="10" cy="6" r="1.800" fill="#e6e6e6"/></svg>
<svg class="a" style="left:9px;top:213px" width="20" height="12" viewBox="0 0 20 12"><path d="M0.500 6C3 2 6.500 0.500 10 0.500C13.500 0.500 17 2 19.500 6C17 10 13.500 11.500 10 11.500C6.500 11.500 3 10 0.500 6Z" fill="#e6e6e6"/><circle cx="10" cy="6" r="3.600" fill="#535353"/><circle cx="10" cy="6" r="1.800" fill="#e6e6e6"/></svg>
<svg class="a" style="left:9px;top:259px" width="20" height="12" viewBox="0 0 20 12"><path d="M0.500 6C3 2 6.500 0.500 10 0.500C13.500 0.500 17 2 19.500 6C17 10 13.500 11.500 10 11.500C6.500 11.500 3 10 0.500 6Z" fill="#e6e6e6"/><circle cx="10" cy="6" r="3.600" fill="#535353"/><circle cx="10" cy="6" r="1.800" fill="#e6e6e6"/></svg>
<svg class="a" style="left:9px;top:304px" width="20" height="12" viewBox="0 0 20 12"><path d="M0.500 6C3 2 6.500 0.500 10 0.500C13.500 0.500 17 2 19.500 6C17 10 13.500 11.500 10 11.500C6.500 11.500 3 10 0.500 6Z" fill="#e6e6e6"/><circle cx="10" cy="6" r="3.600" fill="#535353"/><circle cx="10" cy="6" r="1.800" fill="#e6e6e6"/></svg>
<svg class="a" style="left:9px;top:350px" width="20" height="12" viewBox="0 0 20 12"><path d="M0.500 6C3 2 6.500 0.500 10 0.500C13.500 0.500 17 2 19.500 6C17 10 13.500 11.500 10 11.500C6.500 11.500 3 10 0.500 6Z" fill="#e6e6e6"/><circle cx="10" cy="6" r="3.600" fill="#535353"/><circle cx="10" cy="6" r="1.800" fill="#e6e6e6"/></svg>
<svg class="a" style="left:9px;top:395px" width="20" height="12" viewBox="0 0 20 12"><path d="M0.500 6C3 2 6.500 0.500 10 0.500C13.500 0.500 17 2 19.500 6C17 10 13.500 11.500 10 11.500C6.500 11.500 3 10 0.500 6Z" fill="#e6e6e6"/><circle cx="10" cy="6" r="3.600" fill="#535353"/><circle cx="10" cy="6" r="1.800" fill="#e6e6e6"/></svg>
<svg class="a" style="left:52px;top:164px" width="20" height="20" viewBox="0 0 20 20"><circle cx="10" cy="10" r="5" fill="none" stroke="#e0e0e0" stroke-width="1.300"/><path d="M10 5A5 5 0 0 1 10 15Z" fill="#e0e0e0"/><path d="M10 0.500V3M10 17V19.500M0.500 10H3M17 10H19.500M3.300 3.300L5 5M15 15L16.700 16.700M3.300 16.700L5 15M15 5L16.700 3.300" stroke="#e0e0e0" stroke-width="1.200"/></svg>
<svg class="a" style="left:88px;top:165px" width="10" height="18" viewBox="0 0 10 18"><rect x="1.200" y="0.800" width="7.600" height="8" rx="3.600" fill="none" stroke="#e0e0e0" stroke-width="1.300"/><rect x="1.200" y="9.200" width="7.600" height="8" rx="3.600" fill="none" stroke="#e0e0e0" stroke-width="1.300"/><path d="M5 5.500V12.500" stroke="#e0e0e0" stroke-width="1.400"/></svg>
<div class="a" style="left:103px;top:157px;width:41px;height:34px;background:#fff;border:1px solid #1a1a1a;overflow:hidden"></div><svg class="a" style="left:101px;top:154px" width="46" height="40" viewBox="0 0 46 40"><path d="M0.800 12V0.800H15M31 0.800H45.200V12M45.200 28V39.200H31M15 39.200H0.800V28" fill="none" stroke="#f4f4f4" stroke-width="1.500"/><rect x="3" y="3" width="40" height="34" fill="none" stroke="#0e0e0e" stroke-width="1.600"/></svg>
<div class="t" style="left:154.5px;top:168px;font-size:12.800px;color:#e4e4e4;letter-spacing:0.050px">Brightne...&nbsp; ontrast 1</div>
<svg class="a" style="left:42px;top:206px;overflow:hidden" width="40" height="26" viewBox="0 0 40 26"><rect width="40" height="26" fill="#b8b8b8"/><g transform="scale(0.4)"><rect width="100" height="65" filter="url(#fcloud)"/></g><rect x="0.500" y="0.500" width="39" height="25" fill="none" stroke="#1a1a1a" stroke-width="1.500"/></svg>
<div class="t" style="left:91.29999999999995px;top:214.5px;font-size:12.800px;color:#e4e4e4;letter-spacing:0.050px">Layer 1</div>
<svg class="a" style="left:55px;top:258px" width="14" height="14" viewBox="0 0 14 14"><circle cx="7" cy="7" r="6" fill="none" stroke="#e0e0e0" stroke-width="1.300"/><path d="M11.200 2.800A6 6 0 0 1 2.800 11.200Z" fill="#e0e0e0"/></svg>
<svg class="a" style="left:88px;top:256px" width="10" height="18" viewBox="0 0 10 18"><rect x="1.200" y="0.800" width="7.600" height="8" rx="3.600" fill="none" stroke="#e0e0e0" stroke-width="1.300"/><rect x="1.200" y="9.200" width="7.600" height="8" rx="3.600" fill="none" stroke="#e0e0e0" stroke-width="1.300"/><path d="M5 5.500V12.500" stroke="#e0e0e0" stroke-width="1.400"/></svg>
<div class="a" style="left:103px;top:248px;width:41px;height:34px;background:#fff;border:1px solid #1a1a1a;overflow:hidden"><svg width="41" height="34" viewBox="0 0 41 34" style="position:absolute;left:-1px;top:-1px"><path d="M0 34V24L6 20L12 11L17 17L23 10L29 17L33 16L41 25V34Z" fill="#000"/></svg></div>
<div class="t" style="left:154.5px;top:259px;font-size:12.800px;color:#e4e4e4;letter-spacing:0.050px">Color Fill 1</div>
<svg class="a" style="left:55px;top:303px" width="14" height="14" viewBox="0 0 14 14"><circle cx="7" cy="7" r="6" fill="none" stroke="#e0e0e0" stroke-width="1.300"/><path d="M11.200 2.800A6 6 0 0 1 2.800 11.200Z" fill="#e0e0e0"/></svg>
<svg class="a" style="left:88px;top:301px" width="10" height="18" viewBox="0 0 10 18"><rect x="1.200" y="0.800" width="7.600" height="8" rx="3.600" fill="none" stroke="#e0e0e0" stroke-width="1.300"/><rect x="1.200" y="9.200" width="7.600" height="8" rx="3.600" fill="none" stroke="#e0e0e0" stroke-width="1.300"/><path d="M5 5.500V12.500" stroke="#e0e0e0" stroke-width="1.400"/></svg>
<div class="a" style="left:103px;top:293px;width:41px;height:34px;background:#fff;border:1px solid #1a1a1a;overflow:hidden"></div>
<div class="t" style="left:154.5px;top:304px;font-size:12.800px;color:#e4e4e4;letter-spacing:0.050px">Hue/Saturation 1</div>
<svg class="a" style="left:55px;top:349px" width="14" height="14" viewBox="0 0 14 14"><circle cx="7" cy="7" r="6" fill="none" stroke="#e0e0e0" stroke-width="1.300"/><path d="M11.200 2.800A6 6 0 0 1 2.800 11.200Z" fill="#e0e0e0"/></svg>
<svg class="a" style="left:88px;top:347px" width="10" height="18" viewBox="0 0 10 18"><rect x="1.200" y="0.800" width="7.600" height="8" rx="3.600" fill="none" stroke="#e0e0e0" stroke-width="1.300"/><rect x="1.200" y="9.200" width="7.600" height="8" rx="3.600" fill="none" stroke="#e0e0e0" stroke-width="1.300"/><path d="M5 5.500V12.500" stroke="#e0e0e0" stroke-width="1.400"/></svg>
<div class="a" style="left:103px;top:339px;width:41px;height:34px;background:#fff;border:1px solid #1a1a1a;overflow:hidden"></div>
<div class="t" style="left:154.5px;top:350px;font-size:12.800px;color:#e4e4e4;letter-spacing:0.050px">Curves 1</div>
<svg class="a" style="left:42px;top:388px" width="40" height="27" viewBox="0 0 40 27"><defs><linearGradient id="lg2" x1="0" y1="0" x2="0" y2="1"><stop offset="0" stop-color="#2b3f8e"/><stop offset="0.550" stop-color="#5b78b8"/><stop offset="0.560" stop-color="#d9b77a"/><stop offset="1" stop-color="#d8b06a"/></linearGradient></defs><rect width="40" height="27" fill="url(#lg2)" stroke="#141414" stroke-width="1.500"/><path d="M4 20L13 10L19 16L23 9L31 18L34 16L38 20Z" fill="#c9a56a"/><path d="M4 20L13 10L10 20ZM17 20L23 9L21 20Z" fill="#6d5a3c"/></svg>
<div class="t" style="left:91.29999999999995px;top:396px;font-size:12.800px;color:#e4e4e4;letter-spacing:0.050px">Background</div>
<svg class="a" style="left:247px;top:392px" width="13" height="16" viewBox="0 0 13 16"><path d="M3 7V5C3 0.800 10 0.800 10 5V7" fill="none" stroke="#e0e0e0" stroke-width="1.700"/><rect x="0.500" y="6.500" width="12" height="9" rx="1" fill="#e0e0e0"/><rect x="5.600" y="9.500" width="1.800" height="2.500" fill="#535353"/></svg>
<div class="a" style="left:0;top:892px;width:302px;height:15px;background:#4f4f4f;border-top:1px solid #414141"></div>
<svg class="a" style="left:45px;top:902px" width="18" height="9" viewBox="0 0 18 9"><rect x="0.800" y="1" width="9" height="7" rx="3.500" fill="none" stroke="#8a8a8a" stroke-width="1.300"/><rect x="8" y="1" width="9" height="7" rx="3.500" fill="none" stroke="#8a8a8a" stroke-width="1.300"/></svg>
<div class="t" style="left:83px;top:897px;font-size:13px;color:#9a9a9a;font-style:italic">fx</div>
<svg class="a" style="left:115px;top:901px" width="16" height="10" viewBox="0 0 16 10"><rect width="16" height="10" fill="#a8a8a8"/><circle cx="8" cy="7" r="4" fill="#535353"/></svg>
<svg class="a" style="left:150px;top:901px" width="14" height="10" viewBox="0 0 14 10"><circle cx="7" cy="7" r="6" fill="none" stroke="#e0e0e0" stroke-width="1.300"/><path d="M11.200 2.800A6 6 0 0 1 2.800 11.200Z" fill="#e0e0e0"/></svg>
<svg class="a" style="left:183px;top:901px" width="16" height="10" viewBox="0 0 16 10"><path d="M0 1H6L8 3H16V10H0Z" fill="#e0e0e0"/></svg>
<svg class="a" style="left:218px;top:900px" width="13" height="10" viewBox="0 0 13 10"><rect x="0.800" y="0.800" width="11.400" height="12" fill="none" stroke="#e0e0e0" stroke-width="1.500"/><path d="M1 6H6V10" fill="#e0e0e0"/></svg>
<svg class="a" style="left:253px;top:900px" width="12" height="10" viewBox="0 0 12 10"><path d="M0 3H12M4 3V1H8V3M1.500 3L2.500 14H9.500L10.500 3" fill="none" stroke="#8a8a8a" stroke-width="1.400"/></svg>
</div>
<!-- CC PANEL -->
<div class="a" style="left:1118px;top:172px;width:349px;height:393px;background:#393939;box-shadow:0 2px 6px rgba(0,0,0,0.45)"></div>
<div class="a" style="left:1119px;top:177px;width:347px;height:386px;background:#535353;font-family:'Liberation Sans',sans-serif">
  <div class="a" style="left:0;top:0;width:347px;height:34px;background:#454545"></div>
  <div class="a" style="left:0;top:2px;width:196px;height:33px;background:#535353"></div>
  <div class="t" style="left:13px;top:11px;font-weight:bold;color:#f2f2f2;font-size:13.5px;letter-spacing:-0.065px">Content Credentials (Beta)</div>
  <svg class="a" style="left:293px;top:12px" width="13" height="10" viewBox="0 0 13 10"><path d="M1 1L5 5L1 9M7.500 1L11.500 5L7.500 9" fill="none" stroke="#d0d0d0" stroke-width="1.300"/></svg>
  <div class="a" style="left:314px;top:10px;width:1px;height:14px;background:#9a9a9a"></div>
  <svg class="a" style="left:323px;top:12px" width="13" height="10" viewBox="0 0 13 10"><path d="M0 1H13M0 3.700H13M0 6.400H13M0 9H13" stroke="#c8c8c8" stroke-width="1.200"/></svg>
  <div class="t" style="left:12px;top:53px;color:#939393;font-size:14px;letter-spacing:0.011px">Attach tamper-evident attribution and history data to</div>
  <div class="t" style="left:12px;top:71px;color:#939393;font-size:14px;letter-spacing:0.011px">your content when you export it.</div>
  <div class="a" style="left:12px;top:103px;width:324px;height:1px;background:#646464"></div>
  <div class="a" style="left:12px;top:153px;width:324px;height:1px;background:#646464"></div>
  <div class="a" style="left:12px;top:204px;width:324px;height:1px;background:#646464"></div>
  <div class="a" style="left:12px;top:254px;width:324px;height:1px;background:#646464"></div>
  <div class="a" style="left:12px;top:305px;width:324px;height:1px;background:#646464"></div>
  <!-- checkboxes -->
  <svg class="a" style="left:40px;top:119px" width="18" height="18" viewBox="0 0 18 18"><rect x="0.500" y="0.500" width="17" height="17" rx="3" fill="#e2e2e2"/><path d="M4.500 9L7.800 12.200L13.500 5.500" fill="none" stroke="#2a2a2a" stroke-width="2.400"/></svg>
  <div class="t" style="left:68px;top:123.0px;color:#ececec;font-size:13.8px;letter-spacing:-0.080px">Edits and activity</div>
  <svg class="a" style="left:40px;top:169px" width="18" height="18" viewBox="0 0 18 18"><rect x="0.500" y="0.500" width="17" height="17" rx="3" fill="#e2e2e2"/><path d="M4.500 9L7.800 12.200L13.500 5.500" fill="none" stroke="#2a2a2a" stroke-width="2.400"/></svg>
  <div class="t" style="left:68px;top:173.3px;color:#ececec;font-size:13.8px;letter-spacing:-0.161px">Producer</div>
  <svg class="a" style="left:15px;top:225px" width="12" height="8" viewBox="0 0 12 8"><path d="M1 1L6 6.500L11 1" fill="none" stroke="#b4b4b4" stroke-width="1.400"/></svg>
  <svg class="a" style="left:40px;top:220px" width="18" height="18" viewBox="0 0 18 18"><rect x="0.500" y="0.500" width="17" height="17" rx="3" fill="#e2e2e2"/><path d="M4.500 9L7.800 12.200L13.500 5.500" fill="none" stroke="#2a2a2a" stroke-width="2.400"/></svg>
  <div class="t" style="left:68px;top:223.7px;color:#ececec;font-size:13.8px;letter-spacing:-0.178px">Connected accounts</div>
  <svg class="a" style="left:318px;top:220px" width="18" height="18" viewBox="0 0 18 18"><path d="M2.500 8A6.500 6.500 0 0 1 14 4.500M15.500 10A6.500 6.500 0 0 1 4 13.500" fill="none" stroke="#dcdcdc" stroke-width="1.600"/><path d="M15.200 1V5.500H10.700M2.800 17V12.500H7.300" fill="none" stroke="#dcdcdc" stroke-width="1.600"/></svg>
  <svg class="a" style="left:68px;top:270px" width="18" height="18" viewBox="0 0 18 18"><rect x="0.500" y="0.500" width="17" height="17" rx="3" fill="#e2e2e2"/><path d="M4.500 9L7.800 12.200L13.500 5.500" fill="none" stroke="#2a2a2a" stroke-width="2.400"/></svg>
  <div class="t" style="left:96px;top:275.0px;color:#ececec;font-size:13.8px;letter-spacing:-0.310px">Behance</div>
  <!-- preview btn -->
  <div class="a" style="left:235px;top:322px;width:101px;height:39px;border:2px solid #ebebeb;border-radius:20px"></div>
  <div class="t" style="left:235px;top:335px;width:101px;text-align:center;font-size:14px;font-weight:bold;color:#f2f2f2;letter-spacing:-0.100px">Preview</div>
  <!-- footer -->
  <div class="a" style="left:0;top:377px;width:347px;height:9px;background:#4a4a4a;border-top:1px solid #3c3c3c"></div>
  <div class="a" style="left:158px;top:380px;width:26px;height:4px;background:repeating-linear-gradient(90deg,#3a3a3a 0 2px,#4a4a4a 2px 4px)"></div>
</div>
<!-- CC DIALOG -->
<div class="a" style="left:736px;top:46px;width:368px;height:1122px;border-radius:7px;box-shadow:0 10px 18px -2px rgba(0,0,0,0.6),0 0 3px rgba(0,0,0,0.55)"></div>
<div class="a" style="left:736px;top:46px;width:368px;height:1122px;border-radius:7px;background:#4b4b4b;overflow:hidden">
  <!-- titlebar -->
  <div class="a" style="left:0;top:0;width:368px;height:27px;background:linear-gradient(#e2e2e2,#cdcdcd);border-bottom:1px solid #9c9c9c"></div>
  <div class="a" style="left:8px;top:6px;width:15px;height:15px;border-radius:50%;background:#f4605a"></div>
  <div class="t" style="left:0;top:6.500px;width:368px;text-align:center;font-size:16px;color:#353535;letter-spacing:0.480px">Content Credentials (Beta)</div>
  <!-- scrollbar -->
  <div class="a" style="left:349px;top:28px;width:19px;height:1094px;background:#4d4d4d"></div>
  <div class="a" style="left:352px;top:37px;width:13px;height:778px;border-radius:6px;background:#6c6c6c"></div>
  <!-- intro -->
  <div class="t" style="left:12px;top:42px;color:#8f8f8f;font-size:14px;letter-spacing:-0.015px">People will be able to view this information along</div>
  <div class="t" style="left:12px;top:61px;color:#8f8f8f;font-size:14px;letter-spacing:0.037px">with your content.</div>
  <div class="a" style="left:12px;top:97px;width:324px;height:1px;background:#5c5c5c"></div>
  <!-- preview -->
  <div class="a" style="left:14px;top:118px;width:320px;height:320px;background:#444444;border-radius:3px;box-shadow:0 0 5px 3px #444444"></div>
  <svg class="a" style="left:12px;top:179px" width="324" height="200"><use href="#scene" width="324" height="200"/></svg>
  <!-- signed by -->
  <div class="t sec" style="left:12px;top:465px;font-size:10.7px;letter-spacing:-0.077px">SIGNED BY</div>
  <svg class="a q" style="left:320px;top:462px" width="16" height="16" viewBox="0 0 16 16"><circle cx="8" cy="8" r="6.200" fill="none" stroke="#b8b8b8" stroke-width="1.500"/><path d="M5.800 6.300C5.800 3.800 10.200 3.800 10.200 6.300C10.200 7.800 8 7.800 8 9.600" fill="none" stroke="#b8b8b8" stroke-width="1.300"/><circle cx="8" cy="11.600" r="0.900" fill="#b8b8b8"/></svg>
  <svg class="a" style="left:12px;top:491px" width="21" height="22" viewBox="0 0 21 22"><rect width="21" height="22" rx="2" fill="#e0281f"/><path d="M7 1.800H14L20.500 19V21H0.500V19Z" fill="#fff"/><path d="M10.400 9.500L13.800 18.500H11L10 16H7.800Z" fill="#e0281f"/></svg>
  <div class="t" style="left:43px;top:496.8px;color:#ececec;font-size:13.8px;letter-spacing:-0.161px">Adobe</div>
  <div class="a" style="left:12px;top:533px;width:324px;height:1px;background:#5c5c5c"></div>
  <!-- produced with -->
  <div class="t sec" style="left:12px;top:558.0px;font-size:10.7px;letter-spacing:0.105px">PRODUCED WITH</div>
  <svg class="a q" style="left:320px;top:554px" width="16" height="16" viewBox="0 0 16 16"><circle cx="8" cy="8" r="6.200" fill="none" stroke="#b8b8b8" stroke-width="1.500"/><path d="M5.800 6.300C5.800 3.800 10.200 3.800 10.200 6.300C10.200 7.800 8 7.800 8 9.600" fill="none" stroke="#b8b8b8" stroke-width="1.300"/><circle cx="8" cy="11.600" r="0.900" fill="#b8b8b8"/></svg>
  <div class="a" style="left:12px;top:584px;width:21px;height:20px;border-radius:4px;background:#0a1f3a"></div>
  <div class="t" style="left:12px;top:589px;width:21px;text-align:center;font-size:11px;font-weight:bold;color:#3fa9f5;letter-spacing:-0.300px">Ps</div>
  <div class="t" style="left:43px;top:588.5px;color:#ececec;font-size:13.8px;letter-spacing:-0.394px">Adobe Photoshop 21.05.01</div>
  <div class="t" style="left:43px;top:613.0px;font-size:13.800px;color:#8f8f8f;letter-spacing:-0.137px">Content Credentials (Beta)</div>
  <div class="a" style="left:12px;top:648px;width:324px;height:1px;background:#5c5c5c"></div>
  <!-- edits and activity -->
  <div class="t sec" style="left:12px;top:672px;font-size:10.7px;letter-spacing:0.157px">EDITS AND ACTIVITY</div>
  <svg class="a q" style="left:320px;top:669px" width="16" height="16" viewBox="0 0 16 16"><circle cx="8" cy="8" r="6.200" fill="none" stroke="#b8b8b8" stroke-width="1.500"/><path d="M5.800 6.300C5.800 3.800 10.200 3.800 10.200 6.300C10.200 7.800 8 7.800 8 9.600" fill="none" stroke="#b8b8b8" stroke-width="1.300"/><circle cx="8" cy="11.600" r="0.900" fill="#b8b8b8"/></svg>
  <svg class="a" style="left:12px;top:702px" width="22" height="22" viewBox="0 0 22 22"><g fill="none" stroke="#ececec" stroke-width="1.700"><path d="M8.400 2.500L18 5.200L17.500 16.200L2.500 18.200L1.800 9.200ZM8.400 2.500L17.500 16.200M18 5.200L2.500 18.200"/></g><g fill="#ececec"><circle cx="8.400" cy="2.500" r="2.200"/><circle cx="18" cy="5.200" r="2.200"/><circle cx="1.900" cy="9.200" r="1.900"/><circle cx="17.500" cy="16.200" r="2.200"/><circle cx="2.600" cy="18.200" r="2.200"/></g></svg>
  <div class="t" style="left:43px;top:704.0px;color:#ececec;font-size:13.8px;letter-spacing:-0.089px">AI tools</div>
  <div class="t" style="left:43px;top:727.5px;color:#8f8f8f;font-size:13.8px;letter-spacing:0.062px">Edited with artificial intelligence or machine</div>
  <div class="t" style="left:43px;top:747.0px;color:#8f8f8f;font-size:13.8px;letter-spacing:-0.034px">learning tools</div>
  <svg class="a" style="left:12px;top:782px" width="22" height="17" viewBox="0 0 22 17"><path d="M11.500 1C5.500 1 0.800 4.500 0.800 9C0.800 13 5 16 10.500 16C16.500 16 21.200 13 21.200 8.500C21.200 6.500 19.800 5.800 18.300 6.200C16.800 6.600 15.300 6 15.300 4.500C15.300 3.300 16 2.500 15.300 1.800C14.500 1.100 13 1 11.500 1Z" fill="#ececec"/><g fill="#4b4b4b"><circle cx="5" cy="8.500" r="1.500"/><circle cx="7.500" cy="12" r="1.500"/><circle cx="11.800" cy="12.800" r="1.500"/><circle cx="16" cy="11" r="1.500"/><circle cx="9.500" cy="5" r="1.500"/></g></svg>
  <div class="t" style="left:43px;top:781.0px;color:#ececec;font-size:13.8px;letter-spacing:-0.024px">Color adjustments</div>
  <div class="t" style="left:43px;top:805.2px;color:#8f8f8f;font-size:13.8px;letter-spacing:-0.219px">Changed tone, saturation, etc.</div>
  <svg class="a" style="left:13px;top:838px" width="20" height="20" viewBox="0 0 20 20"><path d="M6 5.500V1.500H18.500V18.500H6V14.500" fill="none" stroke="#ececec" stroke-width="2"/><path d="M0.500 10H12M8 5.800L12.300 10L8 14.200" fill="none" stroke="#ececec" stroke-width="2"/></svg>
  <div class="t" style="left:43px;top:839.0px;color:#ececec;font-size:13.8px;letter-spacing:-0.144px">Imported assets</div>
  <div class="t" style="left:43px;top:863.2px;color:#8f8f8f;font-size:13.8px;letter-spacing:-0.226px">Added images, videos, etc.</div>
  <div class="a" style="left:12px;top:898px;width:324px;height:1px;background:#5c5c5c"></div>
  <!-- assets used -->
  <div class="t sec" style="left:12px;top:922px;font-size:10.7px;letter-spacing:-0.258px">ASSETS USED</div>
  <svg class="a q" style="left:320px;top:919px" width="16" height="16" viewBox="0 0 16 16"><circle cx="8" cy="8" r="6.200" fill="none" stroke="#b8b8b8" stroke-width="1.500"/><path d="M5.800 6.300C5.800 3.800 10.200 3.800 10.200 6.300C10.200 7.800 8 7.800 8 9.600" fill="none" stroke="#b8b8b8" stroke-width="1.300"/><circle cx="8" cy="11.600" r="0.900" fill="#b8b8b8"/></svg>
  <div class="a" style="left:14px;top:953px;width:97px;height:98px;background:#454545;border-radius:2px;box-shadow:0 0 4px 3px #454545"></div>
  <div class="a" style="left:125px;top:953px;width:98px;height:98px;background:#454545;border-radius:2px;box-shadow:0 0 4px 3px #454545"></div>
  <svg class="a" style="left:12px;top:968px" width="101" height="64" viewBox="0 0 101 64"><defs><linearGradient id="sk1" x1="0" y1="0" x2="0.300" y2="1"><stop offset="0" stop-color="#23359a"/><stop offset="0.550" stop-color="#4a67bd"/><stop offset="1" stop-color="#7d95d0"/></linearGradient><linearGradient id="sd1" x1="0" y1="0" x2="0" y2="1"><stop offset="0" stop-color="#d9b36e"/><stop offset="1" stop-color="#e2bb72"/></linearGradient></defs><rect width="101" height="64" fill="url(#sk1)"/><rect y="47" width="101" height="17" fill="url(#sd1)"/><path d="M88 34L101 52H70Z" fill="#cfa765"/><path d="M88 34L77 52H70L84 37Z" fill="#8a6f45"/><path d="M54 21L84 52H34Z" fill="#d4ad6b"/><path d="M54 21L44 52H32L50 25Z" fill="#5e4a30"/><path d="M27 26L58 52H12Z" fill="#d6b06e"/><path d="M27 26L20 50H5L24 29Z" fill="#6a5436"/></svg>
  <svg class="a" style="left:123px;top:968px;overflow:hidden" width="102" height="64" viewBox="0 0 102 64"><rect width="102" height="64" fill="#b4b4b4"/><rect width="102" height="64" filter="url(#fcloud)"/><g fill="#e8e8e8" opacity="0.7"><circle cx="32" cy="33" r="1"/><circle cx="38" cy="40" r="1.2"/><circle cx="70" cy="36" r="1"/><circle cx="76" cy="29" r="0.9"/><circle cx="88" cy="42" r="1.1"/><circle cx="52" cy="24" r="0.9"/><circle cx="20" cy="44" r="1"/></g></svg>
  <div class="a" style="left:87px;top:954px;width:23px;height:23px;border-radius:50%;background:#fff"></div>
  <div class="t" style="left:87px;top:957px;width:23px;text-align:center;font-family:'Liberation Serif',serif;font-weight:bold;font-size:18px;color:#1c1c1c">i</div>
  <div class="a" style="left:12px;top:1071px;width:324px;height:1px;background:#5c5c5c"></div>
  <!-- producer -->
  <div class="t sec" style="left:12px;top:1095px;font-size:10.7px;letter-spacing:-0.196px">PRODUCER</div>
  <svg class="a q" style="left:320px;top:1092px" width="16" height="16" viewBox="0 0 16 16"><circle cx="8" cy="8" r="6.200" fill="none" stroke="#b8b8b8" stroke-width="1.500"/><path d="M5.800 6.300C5.800 3.800 10.200 3.800 10.200 6.300C10.200 7.800 8 7.800 8 9.600" fill="none" stroke="#b8b8b8" stroke-width="1.300"/><circle cx="8" cy="11.600" r="0.900" fill="#b8b8b8"/></svg>
</div>

</div>
</body></html>
